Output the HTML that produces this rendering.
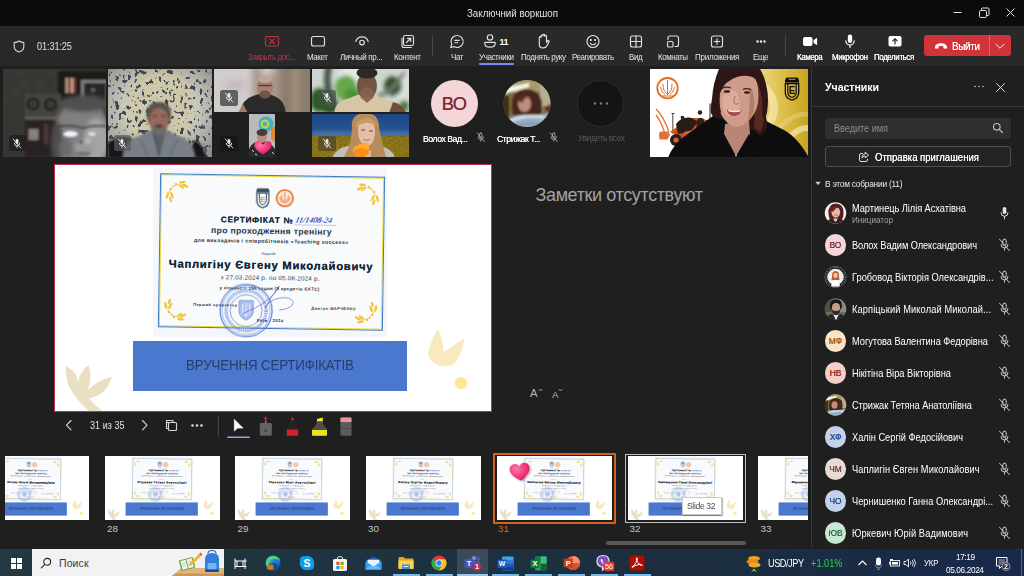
<!DOCTYPE html>
<html lang="ru">
<head>
<meta charset="utf-8">
<title>Заключний воркшоп</title>
<style>
*{box-sizing:border-box;margin:0;padding:0}
html,body{width:1024px;height:576px;overflow:hidden;background:#1f1f1f;font-family:"Liberation Sans","DejaVu Sans",sans-serif;color:#fff}
.a{position:absolute}
.x{position:absolute;white-space:nowrap}
svg{overflow:hidden;display:block}
#titlebar{position:absolute;left:0;top:0;width:1024px;height:26px;background:#0b0b0b}
#toolbar{position:absolute;left:0;top:26px;width:1024px;height:40px;background:#292929}
#taskbar{position:absolute;left:0;top:548.5px;width:1024px;height:27.5px;background:linear-gradient(90deg,#233841 0%,#203340 30%,#1c2e3e 65%,#1a2b45 85%,#18294a 100%)}
#slide{position:absolute;left:54px;top:164px;width:438px;height:248px;background:#fff;border:1.3px solid #c4314b;overflow:hidden}

</style>
</head>
<body>
<div id="titlebar">
<div class="x" style="left:466.50px;top:6.20px;font-size:10.8px;line-height:14px;color:#e4e4e4;letter-spacing:0.003px;transform:scaleX(0.9);transform-origin:0 50%;">Заключний воркшоп</div>
<svg class="a" style="left:950px;top:5px" width="70" height="16" viewBox="0 0 70 16" fill="none" stroke="#e0e0e0" stroke-width="1"><path d="M3.5 7.5h8"/><rect x="29.5" y="5.5" width="7" height="7" rx="1.2"/><path d="M31.5 5.2v-1.2a1 1 0 0 1 1-1h5.500a1 1 0 0 1 1 1v5.500a1 1 0 0 1-1 1h-1.200"/><path d="M56.500 3.500l8 8M64.500 3.500l-8 8"/></svg>
</div>
<div id="toolbar">
<svg class="a" style="left:13px;top:14px" width="12" height="13" viewBox="0 0 12 13" fill="none" stroke="#d8d8d8" stroke-width="1.1" stroke-linejoin="round"><path d="M6 1C4.600 2 3 2.500 1.200 2.600V6.500c0 2.800 2 4.600 4.800 5.600 2.800-1 4.800-2.800 4.800-5.600V2.600C9 2.500 7.400 2 6 1z"/></svg>
<div class="x" style="left:37.00px;top:14.10px;font-size:10.2px;line-height:13px;color:#e0e0e0;letter-spacing:-0.116px;transform:scaleX(0.9);transform-origin:0 50%;">01:31:25</div>
<svg class="a" style="left:260px;top:4.700px" width="24" height="22" viewBox="0 0 24 22" fill="none" stroke="#e0e0e0" stroke-width="1.15" stroke-linecap="round" stroke-linejoin="round"><rect x="5.500" y="5.500" width="13" height="9.500" rx="1.500" stroke="#c4314b"/><path d="M9.700 7.900l4.600 4.600M14.300 7.900l-4.600 4.600" stroke="#c4314b"/></svg>
<div class="x" style="left:248.41px;top:24.60px;font-size:9.2px;line-height:12px;color:#c4314b;letter-spacing:-0.500px;transform:scaleX(0.87);transform-origin:0 50%;">Закрыть дос...</div>
<svg class="a" style="left:305.5px;top:4.700px" width="24" height="22" viewBox="0 0 24 22" fill="none" stroke="#e0e0e0" stroke-width="1.15" stroke-linecap="round" stroke-linejoin="round"><rect x="5.500" y="5.500" width="13" height="9.500" rx="2"/></svg>
<div class="x" style="left:307.04px;top:24.60px;font-size:9.2px;line-height:12px;color:#e4e4e4;letter-spacing:-0.500px;transform:scaleX(0.87);transform-origin:0 50%;">Макет</div>
<svg class="a" style="left:349.5px;top:4.700px" width="24" height="22" viewBox="0 0 24 22" fill="none" stroke="#e0e0e0" stroke-width="1.15" stroke-linecap="round" stroke-linejoin="round"><path d="M5.800 10.500c1-3 3.400-4.600 6.200-4.600s5.200 1.600 6.200 4.600"/><circle cx="12" cy="11.500" r="2.300"/></svg>
<div class="x" style="left:340.25px;top:24.60px;font-size:9.2px;line-height:12px;color:#e4e4e4;letter-spacing:-0.388px;transform:scaleX(0.87);transform-origin:0 50%;">Личный пр...</div>
<svg class="a" style="left:396px;top:4.700px" width="24" height="22" viewBox="0 0 24 22" fill="none" stroke="#e0e0e0" stroke-width="1.15" stroke-linecap="round" stroke-linejoin="round"><rect x="7.500" y="4.500" width="10" height="10" rx="1.800"/><path d="M6 7.200v7a2.300 2.300 0 0 0 2.300 2.300h7"/><path d="M10.500 11.500l4-4M11.500 7.300h3.200v3.200"/></svg>
<div class="x" style="left:394.48px;top:24.60px;font-size:9.2px;line-height:12px;color:#e4e4e4;letter-spacing:-0.500px;transform:scaleX(0.87);transform-origin:0 50%;">Контент</div>
<div class="a" style="left:432px;top:9px;width:1px;height:21px;background:#484848"></div>
<svg class="a" style="left:445px;top:4.700px" width="24" height="22" viewBox="0 0 24 22" fill="none" stroke="#e0e0e0" stroke-width="1.15" stroke-linecap="round" stroke-linejoin="round"><path d="M12 4.500a6 6 0 0 0-5.300 8.800l-1 3.200 3.300-.9A6 6 0 1 0 12 4.500z"/><path d="M9.800 9.300h4.400M9.800 11.700h3"/></svg>
<div class="x" style="left:450.80px;top:24.60px;font-size:9.2px;line-height:12px;color:#e4e4e4;letter-spacing:-0.500px;transform:scaleX(0.87);transform-origin:0 50%;">Чат</div>
<svg class="a" style="left:478px;top:4.700px" width="24" height="22" viewBox="0 0 24 22" fill="none" stroke="#e0e0e0" stroke-width="1.15" stroke-linecap="round" stroke-linejoin="round"><circle cx="12" cy="6.400" r="2.700"/><path d="M6.800 11.400h10.400v1c0 2.200-2.100 3.700-5.200 3.700s-5.200-1.500-5.200-3.700z"/></svg>
<div class="x" style="left:499.50px;top:10.50px;font-size:8.8px;line-height:11px;color:#fff;letter-spacing:-0.302px;font-weight:bold;">11</div>
<div class="x" style="left:478.80px;top:24.60px;font-size:9.2px;line-height:12px;color:#e4e4e4;letter-spacing:-0.465px;transform:scaleX(0.87);transform-origin:0 50%;">Участники</div>
<div class="a" style="left:479px;top:37px;width:35px;height:2px;background:#7f85f5;border-radius:1px"></div>
<svg class="a" style="left:531px;top:4.700px" width="24" height="22" viewBox="0 0 24 22" fill="none" stroke="#e0e0e0" stroke-width="1.15" stroke-linecap="round" stroke-linejoin="round"><path transform="translate(0 -.7)" d="M8.300 11V7.200a.9.900 0 0 1 1.800 0V5.600a.9.900 0 0 1 1.800 0V5a.9.900 0 0 1 1.800 0v.9a.9.900 0 0 1 1.800 0v6.200l1-1.500a.9.900 0 0 1 1.500 1l-2.300 4.200a3.500 3.500 0 0 1-3 1.700h-1a3.400 3.400 0 0 1-3.400-3.400z"/></svg>
<div class="x" style="left:520.50px;top:24.60px;font-size:9.2px;line-height:12px;color:#e4e4e4;letter-spacing:-0.467px;transform:scaleX(0.87);transform-origin:0 50%;">Поднять руку</div>
<svg class="a" style="left:581px;top:4.700px" width="24" height="22" viewBox="0 0 24 22" fill="none" stroke="#e0e0e0" stroke-width="1.15" stroke-linecap="round" stroke-linejoin="round"><circle cx="12" cy="10.500" r="6"/><circle cx="9.900" cy="9" r=".5" fill="#e0e0e0"/><circle cx="14.100" cy="9" r=".5" fill="#e0e0e0"/><path d="M9.300 12.300c.7.900 1.600 1.400 2.700 1.400s2-.5 2.700-1.400"/></svg>
<div class="x" style="left:571.95px;top:24.60px;font-size:9.2px;line-height:12px;color:#e4e4e4;letter-spacing:-0.500px;transform:scaleX(0.87);transform-origin:0 50%;">Реагировать</div>
<svg class="a" style="left:624px;top:4.700px" width="24" height="22" viewBox="0 0 24 22" fill="none" stroke="#e0e0e0" stroke-width="1.15" stroke-linecap="round" stroke-linejoin="round"><rect x="6.500" y="5" width="11" height="11" rx="2"/><path d="M12 5v11M6.500 10.500h11"/></svg>
<div class="x" style="left:629.20px;top:24.60px;font-size:9.2px;line-height:12px;color:#e4e4e4;letter-spacing:-0.500px;transform:scaleX(0.87);transform-origin:0 50%;">Вид</div>
<svg class="a" style="left:661px;top:4.700px" width="24" height="22" viewBox="0 0 24 22" fill="none" stroke="#e0e0e0" stroke-width="1.15" stroke-linecap="round" stroke-linejoin="round"><path d="M7 8.500V7a2 2 0 0 1 2-2h6.500a2 2 0 0 1 2 2v6.500a2 2 0 0 1-2 2H14"/><rect x="6.500" y="10.500" width="5.500" height="5.500" rx="1.300"/></svg>
<div class="x" style="left:657.94px;top:24.60px;font-size:9.2px;line-height:12px;color:#e4e4e4;letter-spacing:-0.500px;transform:scaleX(0.87);transform-origin:0 50%;">Комнаты</div>
<svg class="a" style="left:705px;top:4.700px" width="24" height="22" viewBox="0 0 24 22" fill="none" stroke="#e0e0e0" stroke-width="1.15" stroke-linecap="round" stroke-linejoin="round"><rect x="6.500" y="5" width="11" height="11" rx="2"/><path d="M12 7.800v5.400M9.300 10.500h5.400"/></svg>
<div class="x" style="left:694.75px;top:24.60px;font-size:9.2px;line-height:12px;color:#e4e4e4;letter-spacing:-0.297px;transform:scaleX(0.87);transform-origin:0 50%;">Приложения</div>
<svg class="a" style="left:749px;top:4.700px" width="24" height="22" viewBox="0 0 24 22" fill="none" stroke="#e0e0e0" stroke-width="1.15" stroke-linecap="round" stroke-linejoin="round"><circle cx="8.500" cy="10.500" r=".7" fill="#e0e0e0"/><circle cx="12" cy="10.500" r=".7" fill="#e0e0e0"/><circle cx="15.500" cy="10.500" r=".7" fill="#e0e0e0"/></svg>
<div class="x" style="left:753.29px;top:24.60px;font-size:9.2px;line-height:12px;color:#e4e4e4;letter-spacing:-0.500px;transform:scaleX(0.87);transform-origin:0 50%;">Еще</div>
<div class="a" style="left:785px;top:9px;width:1px;height:21px;background:#484848"></div>
<svg class="a" style="left:797.5px;top:4.700px" width="24" height="22" viewBox="0 0 24 22" fill="none" stroke="#e0e0e0" stroke-width="1.15" stroke-linecap="round" stroke-linejoin="round"><rect x="5" y="6" width="9.500" height="9" rx="2" fill="#fff" stroke="none"/><path d="M15.500 9.300l3-2.300a.4.400 0 0 1 .6.300v6.400a.4.400 0 0 1-.6.300l-3-2.300z" fill="#fff" stroke="none"/></svg>
<div class="x" style="left:796.60px;top:24.60px;font-size:9.2px;line-height:12px;color:#fff;letter-spacing:-0.500px;transform:scaleX(0.87);transform-origin:0 50%;text-shadow:0 0 0.45px #fff;">Камера</div>
<svg class="a" style="left:838px;top:4.700px" width="24" height="22" viewBox="0 0 24 22" fill="none" stroke="#e0e0e0" stroke-width="1.15" stroke-linecap="round" stroke-linejoin="round"><rect x="9.800" y="3.500" width="4.400" height="8.500" rx="2.200" fill="#fff" stroke="none"/><path d="M7.800 9.800a4.200 4.200 0 0 0 8.400 0M12 14v2.500" stroke="#fff" stroke-width="1.200"/></svg>
<div class="x" style="left:832.00px;top:24.60px;font-size:9.2px;line-height:12px;color:#fff;letter-spacing:-0.492px;transform:scaleX(0.87);transform-origin:0 50%;text-shadow:0 0 0.45px #fff;">Микрофон</div>
<svg class="a" style="left:882.5px;top:4.700px" width="24" height="22" viewBox="0 0 24 22" fill="none" stroke="#e0e0e0" stroke-width="1.15" stroke-linecap="round" stroke-linejoin="round"><rect x="5.500" y="5" width="13" height="10.500" rx="1.800" fill="#fff" stroke="none"/><path d="M12 13V7.800M9.800 9.800L12 7.600l2.200 2.200" stroke="#292929" stroke-width="1.200"/></svg>
<div class="x" style="left:874.36px;top:24.60px;font-size:9.2px;line-height:12px;color:#fff;letter-spacing:-0.500px;transform:scaleX(0.87);transform-origin:0 50%;text-shadow:0 0 0.45px #fff;">Поделиться</div>
<div class="a" style="left:924px;top:9px;width:87px;height:21px;background:#d13438;border-radius:3px"></div>
<div class="a" style="left:989px;top:9px;width:1px;height:21px;background:#de6366"></div>
<svg class="a" style="left:934px;top:15px" width="14" height="10" viewBox="0 0 14 10"><path d="M1 6.200C1 3.500 4 2.200 7 2.200s6 1.300 6 4v.6c0 .6-.5 1-1.100.9l-1.700-.3c-.5-.1-.8-.5-.8-1V5.500C8.500 5.200 7.800 5.100 7 5.100s-1.500.1-2.400.4v.9c0 .5-.3.900-.8 1l-1.700.3C1.500 7.800 1 7.400 1 6.800z" fill="#fff"/></svg>
<div class="x" style="left:952.00px;top:14.10px;font-size:9.8px;line-height:13px;color:#fff;letter-spacing:-0.254px;text-shadow:0 0 0.6px #fff;transform:scaleY(1.12);">Выйти</div>
<svg class="a" style="left:994.500px;top:17.300px" width="10" height="7" viewBox="0 0 10 7" fill="none" stroke="#fff" stroke-width=".9" stroke-linecap="round" stroke-linejoin="round"><path d="M1 1.200l4 4 4-4"/></svg>
</div>
<svg width="0" height="0" style="position:absolute"><defs><filter id="b1" x="-20%" y="-20%" width="140%" height="140%"><feGaussianBlur stdDeviation="1"/></filter><filter id="b07" x="-20%" y="-20%" width="140%" height="140%"><feGaussianBlur stdDeviation=".7"/></filter><filter id="b2" x="-20%" y="-20%" width="140%" height="140%"><feGaussianBlur stdDeviation="2"/></filter><filter id="b3" x="-30%" y="-30%" width="160%" height="160%"><feGaussianBlur stdDeviation="3.500"/></filter><filter id="b05" x="-20%" y="-20%" width="140%" height="140%"><feGaussianBlur stdDeviation=".5"/></filter><filter id="wall" x="0" y="0" width="100%" height="100%" color-interpolation-filters="sRGB"><feTurbulence type="fractalNoise" baseFrequency=".26 .2" numOctaves="2" seed="11" result="n"/><feColorMatrix in="n" type="matrix" values="0 0 0 0 .2  0 0 0 0 .22  0 0 0 0 .3  -9 -9 0 0 7.9"/><feGaussianBlur stdDeviation=".5"/></filter><filter id="damask" x="0" y="0" width="100%" height="100%" color-interpolation-filters="sRGB"><feTurbulence type="turbulence" baseFrequency=".09" numOctaves="1" seed="4"/><feColorMatrix type="matrix" values="0 0 0 0 .3  0 0 0 0 .3  0 0 0 0 .27  2.5 0 0 0 -.3"/></filter><filter id="field" x="0" y="0" width="100%" height="100%" color-interpolation-filters="sRGB"><feTurbulence type="fractalNoise" baseFrequency=".5" numOctaves="1" seed="3"/><feColorMatrix type="matrix" values="0 0 0 0 .35  0 0 0 0 .27  0 0 0 0 .02  0 0 0 .9 -.25"/></filter><radialGradient id="vig" cx=".5" cy=".45" r=".75"><stop offset=".45" stop-color="#50545e" stop-opacity="0"/><stop offset="1" stop-color="#50545e" stop-opacity=".55"/></radialGradient><linearGradient id="gy" x1="0" x2="1" y1="0" y2="0"><stop offset="0" stop-color="#f6ecc4"/><stop offset=".5" stop-color="#e2c95c"/><stop offset="1" stop-color="#c9a51e"/></linearGradient><linearGradient id="gsky" x1="0" x2="0" y1="0" y2="1"><stop offset="0" stop-color="#1b4684"/><stop offset="1" stop-color="#3d6eaa"/></linearGradient><radialGradient id="heart" cx=".35" cy=".3" r=".8"><stop offset="0" stop-color="#ff7aa8"/><stop offset=".6" stop-color="#f0347a"/><stop offset="1" stop-color="#c81860"/></radialGradient></defs></svg>
<svg class="a" style="left:3px;top:69px;" width="103" height="88" viewBox="3 69 103 88" preserveAspectRatio="none"><rect x="3" y="69" width="103" height="88" fill="#363733"/><rect x="3" y="69" width="60" height="40" filter="url(#damask)" opacity=".22"/><g filter="url(#b1)"><rect x="58" y="71" width="50" height="30" fill="#1e1b19"/><rect x="65.500" y="78" width="3" height="15" fill="#b59c8a"/><rect x="68.500" y="78" width="2.500" height="15" fill="#8a3a30"/><rect x="71" y="78" width="2.500" height="15" fill="#c0ae9e"/><rect x="73.500" y="78" width="2.500" height="15" fill="#7a3830"/><rect x="81" y="80" width="26" height="21" fill="#7c7c7a"/><rect x="84" y="83" width="22" height="18" fill="#262626"/><ellipse cx="93" cy="90" rx="2.500" ry="2" fill="#6a6458"/><rect x="25" y="94" width="36" height="23" fill="#454541"/><circle cx="33" cy="104" r="6.800" fill="#222220"/><circle cx="50.500" cy="104.500" r="6.800" fill="#222220"/><circle cx="33" cy="104" r="4" fill="#3a3a36"/><circle cx="50.500" cy="104.500" r="4" fill="#3a3a36"/><rect x="25" y="117" width="32" height="40" fill="#2a2220"/><rect x="25" y="117" width="32" height="2.500" fill="#6a6258"/><rect x="28.500" y="129" width="10" height="11" fill="#85817a"/><rect x="44" y="124" width="4" height="20" fill="#4a3a36"/><rect x="3" y="126" width="22" height="31" fill="#343431"/></g><g filter="url(#b2)"><ellipse cx="84" cy="104" rx="26" ry="9" fill="#4a4a48"/><ellipse cx="82" cy="137" rx="29" ry="37" fill="#808080"/><ellipse cx="84" cy="104" rx="24" ry="8" fill="#505050"/><ellipse cx="96" cy="140" rx="12" ry="22" fill="#a4a4a4"/><ellipse cx="84" cy="148" rx="10" ry="8" fill="#9a9a9a"/><ellipse cx="57" cy="142" rx="6" ry="20" fill="#4e4e4e"/><ellipse cx="66" cy="148" rx="7" ry="10" fill="#6c6c6c"/></g><g filter="url(#b1)"><path d="M56 127q13-3 27 1q10-3 23-2" stroke="#3a3a3a" stroke-width="1.600" fill="none"/><ellipse cx="70.500" cy="134" rx="7.500" ry="3" fill="#f0f6ff"/><ellipse cx="92" cy="134" rx="3.800" ry="1.800" fill="#e0e8f2"/><ellipse cx="81" cy="142" rx="2" ry="1.200" fill="#4a4a4a"/><ellipse cx="88" cy="141" rx="3.500" ry="3" fill="#b4b4b4"/><ellipse cx="83" cy="153.500" rx="8" ry="1.800" fill="#7a6c6e"/></g></svg>
<div class="a" style="left:8.6px;top:135.4px;width:17.600px;height:15.600px;border-radius:2.500px;background:rgba(30,30,30,.8)"><svg class="a" style="left:3.800px;top:2.300px" width="10" height="11" viewBox="0 0 10 11" fill="none" stroke="#e8e8e8" stroke-width=".9" stroke-linecap="round"><rect x="3.600" y="1" width="2.800" height="5" rx="1.400" fill="#e8e8e8" stroke="none"/><path d="M2.300 5.200a2.700 2.700 0 0 0 5.400 0M5 8v1.600M1.200 1l7.600 9"/></svg></div>
<svg class="a" style="left:108px;top:69px;" width="104" height="88" viewBox="108 69 104 88" preserveAspectRatio="none"><rect x="108" y="69" width="104" height="88" fill="#cbcabd"/><ellipse cx="160" cy="110" rx="34" ry="50" fill="#cfc8a6" opacity=".8" filter="url(#b3)"/><rect x="108" y="69" width="104" height="88" filter="url(#wall)" opacity=".92"/><rect x="108" y="69" width="104" height="88" fill="url(#vig)"/><g filter="url(#b1)"><path d="M108 158v-16q10-6 24-4l-2 20zM188 158l6-18q10 4 12 18z" fill="#19191b"/><path d="M123 158q0-18 16-22l10-5h20l10 5q14 4 16 22z" fill="#787f89"/><path d="M140 140q6 8 8 18M178 140q-6 8-8 18" stroke="#646b75" stroke-width="1.500" fill="none"/><path d="M152 131l7 27 7-27z" fill="#596069"/><path d="M147 118q-2-16 12-16q13 0 12 16l-2 6h-20z" fill="#55534e"/><ellipse cx="159" cy="121" rx="9.800" ry="13" fill="#96695a"/><ellipse cx="159" cy="130.500" rx="7.800" ry="5.500" fill="#706a66"/><ellipse cx="159" cy="126" rx="3.800" ry="1.500" fill="#42322e"/><path d="M152 116h5M161 116h5" stroke="#3a2a26" stroke-width="1.200"/><path d="M154 134l5 22" stroke="#3a3a3c" stroke-width=".8"/></g></svg>
<div class="a" style="left:113.6px;top:135.4px;width:17.600px;height:15.600px;border-radius:2.500px;background:rgba(90,90,86,.7)"><svg class="a" style="left:3.800px;top:2.300px" width="10" height="11" viewBox="0 0 10 11" fill="none" stroke="#e8e8e8" stroke-width=".9" stroke-linecap="round"><rect x="3.600" y="1" width="2.800" height="5" rx="1.400" fill="#e8e8e8" stroke="none"/><path d="M2.300 5.200a2.700 2.700 0 0 0 5.400 0M5 8v1.600M1.200 1l7.600 9"/></svg></div>
<svg class="a" style="left:214px;top:69px;" width="96" height="43" viewBox="214 69 96 43" preserveAspectRatio="none"><rect x="214" y="69" width="96" height="43" fill="#a8988a"/><g filter="url(#b3)"><rect x="206" y="62" width="46" height="56" fill="#d2cdcd"/><rect x="226" y="80" width="18" height="10" fill="#c4b8b8"/><rect x="254" y="62" width="26" height="56" fill="#a8968a"/><rect x="280" y="62" width="36" height="56" fill="#8a7a6a"/><rect x="292" y="62" width="8" height="56" fill="#a09080"/><rect x="262" y="66" width="10" height="9" fill="#e0d6d6"/></g><g filter="url(#b07)"><path d="M240 113q2-14 13-17l6-2h10l5 2q10 3 12 17z" fill="#2b2a2b"/><path d="M238 113l5-9 5 9z" fill="#a07a64"/><ellipse cx="265" cy="87" rx="8" ry="10.500" fill="#a5806e"/><ellipse cx="265" cy="79.500" rx="7" ry="3.500" fill="#bfa498"/><ellipse cx="265" cy="94.500" rx="5.500" ry="4" fill="#6f5648"/><path d="M258.500 85.500h13" stroke="#4a3c38" stroke-width="1.300"/></g></svg>
<div class="a" style="left:220px;top:90px;width:17.600px;height:15.600px;border-radius:2.500px;background:rgba(72,72,72,.82)"><svg class="a" style="left:3.800px;top:2.300px" width="10" height="11" viewBox="0 0 10 11" fill="none" stroke="#e8e8e8" stroke-width=".9" stroke-linecap="round"><rect x="3.600" y="1" width="2.800" height="5" rx="1.400" fill="#e8e8e8" stroke="none"/><path d="M2.300 5.200a2.700 2.700 0 0 0 5.400 0M5 8v1.600M1.200 1l7.600 9"/></svg></div>
<svg class="a" style="left:312px;top:69px;" width="97" height="43" viewBox="312 69 97 43" preserveAspectRatio="none"><rect x="312" y="69" width="97" height="43" fill="#cfd6cf"/><g filter="url(#b2)"><ellipse cx="350" cy="76" rx="12" ry="8" fill="#e6ece6"/><ellipse cx="402" cy="86" rx="8" ry="16" fill="#dde1dd"/><ellipse cx="346" cy="88" rx="11" ry="13" fill="#68a848"/><ellipse cx="353" cy="96" rx="8" ry="8" fill="#4f8f3a"/><ellipse cx="319" cy="100" rx="9" ry="12" fill="#2c5a24"/><ellipse cx="330" cy="109" rx="8" ry="5" fill="#2a5222"/><ellipse cx="393" cy="86" rx="9" ry="10" fill="#2f4f26"/><ellipse cx="404" cy="106" rx="5" ry="6" fill="#4a7a3c"/><path d="M329 66q-6 24 8 40" stroke="#36463a" stroke-width="6" fill="none"/><path d="M378 96q16-4 26-24" stroke="#6e7c70" stroke-width="4" fill="none"/></g><g filter="url(#b07)"><path d="M334 113q2-12 13-14l10-4h16l12 4q12 2 17 14z" fill="#d6c6a4"/><ellipse cx="367" cy="86" rx="10" ry="13.500" fill="#735242"/><ellipse cx="367" cy="93" rx="7" ry="6" fill="#866050"/><ellipse cx="367" cy="73" rx="10.500" ry="5.500" fill="#2b2926"/><path d="M360 97l7 6 7-6z" fill="#8a6652"/><path d="M393 102q10 2 13 11h-17z" fill="#6e5038"/></g></svg>
<div class="a" style="left:318px;top:90px;width:17.600px;height:15.600px;border-radius:2.500px;background:rgba(70,80,70,.7)"><svg class="a" style="left:3.800px;top:2.300px" width="10" height="11" viewBox="0 0 10 11" fill="none" stroke="#e8e8e8" stroke-width=".9" stroke-linecap="round"><rect x="3.600" y="1" width="2.800" height="5" rx="1.400" fill="#e8e8e8" stroke="none"/><path d="M2.300 5.200a2.700 2.700 0 0 0 5.400 0M5 8v1.600M1.200 1l7.600 9"/></svg></div>
<svg class="a" style="left:249px;top:114px;" width="26" height="43" viewBox="249 114 26 43" preserveAspectRatio="none"><rect x="249" y="114" width="26" height="43" fill="#b9babc"/><g filter="url(#b05)"><circle cx="266" cy="124" r="7.500" fill="#3fb0c2"/><circle cx="265" cy="124" r="4.500" fill="#c9cf4a"/><circle cx="265" cy="124" r="2.300" fill="#3fb0c2"/><path d="M271 128l4-2v16l-4-3z" fill="#e08a30"/><path d="M249 157v-8q4-8 12-8t14 8v8z" fill="#2a2a2c"/><path d="M252 150l2 2M258 146l2 2M268 147l2 2M272 152l2 2M255 154l2 1M264 150l1 2" stroke="#d8d8d8" stroke-width="1"/><ellipse cx="262" cy="137" rx="5" ry="6" fill="#b98c7c"/><ellipse cx="262" cy="132.500" rx="5.500" ry="3.500" fill="#4a3a38"/></g><path d="M263 155.500c-5-3.200-8.600-6-8.600-9.500a3.900 3.900 0 0 1 7.200-2.100l1.400 1.900 1.400-1.900a3.900 3.900 0 0 1 7.200 2.100c0 3.500-3.600 6.300-8.600 9.500z" fill="url(#heart)" transform="translate(0 -1)"/></svg>
<div class="a" style="left:220px;top:135.8px;width:17.600px;height:15.600px;border-radius:2.500px;background:rgba(22,22,22,.9)"><svg class="a" style="left:3.800px;top:2.300px" width="10" height="11" viewBox="0 0 10 11" fill="none" stroke="#e8e8e8" stroke-width=".9" stroke-linecap="round"><rect x="3.600" y="1" width="2.800" height="5" rx="1.400" fill="#e8e8e8" stroke="none"/><path d="M2.300 5.200a2.700 2.700 0 0 0 5.400 0M5 8v1.600M1.200 1l7.600 9"/></svg></div>
<svg class="a" style="left:312px;top:114px;" width="97" height="43" viewBox="312 114 97 43" preserveAspectRatio="none"><rect x="312" y="114" width="97" height="43" fill="url(#gsky)"/><rect x="312" y="131" width="97" height="6" fill="#7f9fc4" opacity=".3" filter="url(#b1)"/><rect x="312" y="136.200" width="97" height="21" fill="#94801c"/><rect x="312" y="136.200" width="97" height="21" filter="url(#field)"/><g filter="url(#b07)"><path d="M332 158q4-10 16-12h32q12 2 15 12z" fill="#c4bcbc"/><path d="M352 128q-2-14 13-15q14 0 14 14q2 12 7 30l-14 2h-16l-12-2q8-14 8-29z" fill="#b88c5c"/><path d="M358 130q0-10 8-10t9 10q0 10-4 14q-4 3-8 0q-5-4-5-14z" fill="#e6bea6"/><path d="M355 128q2-10 11-10q9 0 11 9q-6-5-12-4q-6 1-10 5z" fill="#c89c68"/><path d="M360 150q5 4 11 0v8h-11z" fill="#dab49c"/></g><g filter="url(#b05)"><path d="M361 130h4M369 131h4" stroke="#5a4038" stroke-width="1"/><path d="M363 139.500q3.500 1.500 7 0" stroke="#b46a62" stroke-width="1" fill="none"/><path d="M353 149l2.500-3.500 2 1 2-3 2 1 2-2.500 2 1.500 2-1 1.500 3.500v6q-2 4.500-8 4.500t-8.500-5z" fill="#ffab2e"/><path d="M353.500 150q7-4 15 0v3q-2 4.500-7.500 4.500t-7.500-5z" fill="#fb8c1a"/></g></svg>
<div class="a" style="left:318px;top:135.8px;width:17.600px;height:15.600px;border-radius:2.500px;background:rgba(84,74,40,.8)"><svg class="a" style="left:3.800px;top:2.300px" width="10" height="11" viewBox="0 0 10 11" fill="none" stroke="#e8e8e8" stroke-width=".9" stroke-linecap="round"><rect x="3.600" y="1" width="2.800" height="5" rx="1.400" fill="#e8e8e8" stroke="none"/><path d="M2.300 5.200a2.700 2.700 0 0 0 5.400 0M5 8v1.600M1.200 1l7.600 9"/></svg></div>
<div class="a" style="left:431px;top:80px;width:47px;height:47px;border-radius:50%;background:#f3d6d8"></div>
<div class="x" style="left:441.63px;top:92.30px;font-size:18.3px;line-height:24px;color:#85283a;letter-spacing:-0.500px;text-shadow:0 0 0.5px #85283a;">ВО</div>
<div class="x" style="left:423.00px;top:131.70px;font-size:9.8px;line-height:13px;color:#fff;letter-spacing:-0.500px;transform:scaleX(0.88);transform-origin:0 50%;text-shadow:0 0 0.35px #fff;">Волох Вад...</div>
<svg class="a" style="left:475.5px;top:132.3px" width="9.500" height="10.500" viewBox="0 0 11 12" fill="none" stroke="#c4c4c4" stroke-width=".9" stroke-linecap="round"><rect x="4.100" y="1" width="2.800" height="5.400" rx="1.400"/><path d="M2.500 5.500a3 3 0 0 0 6 0M5.500 8.600v1.900M1.300 1l8.400 10"/></svg>
<svg class="a" style="left:503px;top:80px;" width="48" height="48" viewBox="503 80 48 48" preserveAspectRatio="none"><defs><clipPath id="ca2"><circle cx="527" cy="103.500" r="23.500"/></clipPath></defs><g clip-path="url(#ca2)"><rect x="503" y="80" width="48" height="48" fill="#7d6d42"/><g filter="url(#b1)"><rect x="500" y="78" width="54" height="14" fill="#a89c6c"/><path d="M505 88l24-5v4l-24 7z" fill="#f6f6ea"/><rect x="540" y="84" width="14" height="26" fill="#b8ad90"/><rect x="500" y="96" width="9" height="34" fill="#3a3018"/><path d="M512 104q0-14 14-15q14 0 16 14q1 10-4 16h-22q-5-6-4-15z" fill="#4a261e"/><ellipse cx="524.500" cy="104" rx="6.500" ry="8" fill="#c08e7c"/><path d="M517 100q4-7 14-5q-6 2-9 8z" fill="#5a2e24"/><path d="M503 130q3-16 22-15q14 1 26-3v18z" fill="#98aec4"/><path d="M508 122q14-8 36-5" stroke="#d6e0ea" stroke-width="3" fill="none"/><path d="M512 128q14-6 30-4" stroke="#7f96ae" stroke-width="2" fill="none"/><path d="M541 108q7 2 10 8v-12z" fill="#5f3426"/></g></g></svg>
<div class="x" style="left:496.70px;top:131.70px;font-size:9.8px;line-height:13px;color:#fff;letter-spacing:-0.467px;transform:scaleX(0.88);transform-origin:0 50%;text-shadow:0 0 0.35px #fff;">Стрижак Т...</div>
<svg class="a" style="left:549px;top:132.3px" width="9.500" height="10.500" viewBox="0 0 11 12" fill="none" stroke="#c4c4c4" stroke-width=".9" stroke-linecap="round"><rect x="4.100" y="1" width="2.800" height="5.400" rx="1.400"/><path d="M2.500 5.500a3 3 0 0 0 6 0M5.500 8.600v1.900M1.300 1l8.400 10"/></svg>
<div class="a" style="left:577px;top:80px;width:47px;height:47px;border-radius:50%;background:#141414;border:1px solid #2b2b2b"></div>
<svg class="a" style="left:592px;top:101px" width="18" height="5" viewBox="0 0 18 5"><circle cx="3" cy="2.500" r="1.200" fill="#7c7c7c"/><circle cx="9" cy="2.500" r="1.200" fill="#7c7c7c"/><circle cx="15" cy="2.500" r="1.200" fill="#7c7c7c"/></svg>
<div class="x" style="left:577.50px;top:132.20px;font-size:9.6px;line-height:12px;color:#5a5a5a;letter-spacing:-0.456px;transform:scaleX(0.88);transform-origin:0 50%;">Увидеть всех</div>
<svg class="a" style="left:650px;top:69px;" width="158" height="88" viewBox="650 69 158 88" preserveAspectRatio="none"><defs><clipPath id="cbv"><rect x="650" y="69" width="158" height="88"/></clipPath></defs><g clip-path="url(#cbv)"><rect x="650" y="69" width="158" height="88" fill="#fff"/><rect x="740" y="69" width="68" height="88" fill="url(#gy)"/><circle cx="808" cy="150" r="22" fill="none" stroke="#f3e7b0" stroke-width="6" opacity=".7"/><circle cx="808" cy="150" r="36" fill="none" stroke="#efe0a0" stroke-width="5" opacity=".35"/><circle cx="748" cy="108" r="26" fill="none" stroke="#fff6d8" stroke-width="8" opacity=".5"/><g filter="url(#b05)"><circle cx="667.500" cy="88.200" r="10.200" fill="none" stroke="#e2701c" stroke-width="1.800"/><path d="M667.500 80v15M663 84q0 8 4.500 10q4.500-2 4.500-10M660.500 87q1 6 5 8M674.500 87q-1 6-5 8M662 96h11" stroke="#e2701c" stroke-width="1" fill="none"/><path d="M786.500 77.500h11l1.500 2.500v2.500h-14v-2.500z" fill="#111"/><path d="M788.500 79.300h7" stroke="#e2c860" stroke-width=".8"/><path d="M785.300 83.500h13.400v9q0 6-6.700 7.700q-6.700-1.700-6.700-7.700z" fill="none" stroke="#111" stroke-width="1.300"/><path d="M787.800 84v8.300q0 4 4.200 5.200q4.200-1.200 4.200-5.200V84" fill="none" stroke="#111" stroke-width="1.200"/><text x="792" y="94.300" font-size="10" font-weight="bold" text-anchor="middle" fill="#111" font-family="Liberation Sans, sans-serif">Е</text><path d="M656 109q8 8 13 23M656 115q6 8 9 19" stroke="#e2763a" stroke-width="1.300" fill="none"/><path d="M659 134q0-2.500 3-2.500h6l2 3-2.500 5h-8z" fill="#e2703a"/><path d="M672.800 113.500v20M671.500 113.500h3" stroke="#3a2a24" stroke-width=".9"/><path d="M710 103.500v20" stroke="#2a2220" stroke-width="1"/><path d="M670 132l8-6 10-8h14l8 4v14l-20 6z" fill="#c8561e"/><path d="M676 124q6-8 16-6l6 4-8 10-12 2z" fill="#2a1c18"/><circle cx="682.500" cy="117.500" r="1.800" fill="#2a1c18"/><circle cx="700" cy="112.500" r="2.200" fill="#2a2220"/><path d="M696.500 121q3.500-6 7.500-1v8h-7.500z" fill="#2a2220"/><circle cx="676" cy="140" r="6" fill="#2a1c18"/><circle cx="676" cy="140" r="2.600" fill="#d8642a"/><path d="M684 132l14-3 2 8-14 4z" fill="#e0662a"/></g><g filter="url(#b07)"><path d="M667 160q6-17 22-27l24-17 5-4 46 8 16 8q18 8 30 32z" fill="#0b0b0d"/><path d="M719 69q-6 14-7 30q-2 10-1 14q2 6 10 6l34 12q4 6 6 4q8-6 6-14q-2-4 0-8q2-14 0-24q-2-12-7-20z" fill="#2e1612"/><path d="M758 84q6 14 4 30q4 8-2 18l-6-4q2-24 0-44z" fill="#5a2a20"/><path d="M725 124l-1 10 12 26 14-26-1-14z" fill="#b98674"/><path d="M717 96q0-12 6-18q10-6 24-4q10 2 11 14q2 16-4 26q-6 10-16 13q-8 0-14-8q-6-8-7-23z" fill="#cf9c8a"/><ellipse cx="731" cy="103" rx="9" ry="13" fill="#e0b0a0" opacity=".75"/><path d="M750 86q6 10 4 24q-2 8-6 12q2-18 2-36z" fill="#a87262" opacity=".7"/><path d="M717 100q-2-14 4-24q10-8 24-7q10 0 14 12q-10-8-22-4q-12 4-16 14z" fill="#2e1612"/><path d="M716 96q-1 10 2 18l3-2q-2-8-1-18z" fill="#2e1612"/></g><g filter="url(#b05)"><path d="M722 88.500q4-2.500 9-.5M743 89.500q4-2 8 .5" stroke="#3a2420" stroke-width="1.300" fill="none"/><ellipse cx="727" cy="91.500" rx="3.200" ry="1.300" fill="#2a1a18"/><ellipse cx="747" cy="92.500" rx="3" ry="1.300" fill="#2a1a18"/><path d="M735 96q-1.500 5-1 7.500q2 1.500 5 0" stroke="#a87060" stroke-width="1" fill="none"/><path d="M726.500 109.500q7 2.500 15.500 0q-2 6.500-8 6.500t-7.500-6.500z" fill="#a84850"/><path d="M728.500 110.500q6 1.800 12 0" stroke="#f6eeee" stroke-width="1.700" fill="none"/><path d="M724 134l12 22 13-22 8 26h-40z" fill="#0b0b0d"/><circle cx="736" cy="155.500" r=".9" fill="#9bc"/></g></g></svg>
<div class="x" style="left:535.50px;top:184.30px;font-size:18px;line-height:23px;color:#a2a2a2;letter-spacing:-0.378px;">Заметки отсутствуют</div>
<div class="x" style="left:530.00px;top:386.30px;font-size:11.3px;line-height:15px;color:#b4b4b4;letter-spacing:0.000px;">A</div>
<svg class="a" style="left:537.500px;top:387.600px" width="5" height="4" viewBox="0 0 5 4" fill="none" stroke="#b4b4b4" stroke-width=".8"><path d="M.8 3l1.700-2 1.700 2"/></svg>
<div class="x" style="left:552.00px;top:387.80px;font-size:9.7px;line-height:13px;color:#b4b4b4;letter-spacing:0.000px;">A</div>
<svg class="a" style="left:558px;top:388.300px" width="5" height="4" viewBox="0 0 5 4" fill="none" stroke="#b4b4b4" stroke-width=".8"><path d="M.8 1l1.700 2 1.700-2"/></svg>
<svg class="a" style="left:60px;top:416px" width="300" height="22" viewBox="60 416 300 22" fill="none" stroke="#d6d6d6" stroke-width="1.100" stroke-linecap="round" stroke-linejoin="round"><path d="M71 420.500l-4.500 4.700 4.500 4.700"/><path d="M142.500 420.500l4.500 4.700-4.500 4.700"/><path d="M166.500 422.500v-2h6.500v2"/><rect x="168.500" y="422.500" width="8" height="8" rx="1"/><path d="M166.500 422.500h2v6h-2z"/><circle cx="192.500" cy="425.500" r=".8" fill="#d6d6d6"/><circle cx="197" cy="425.500" r=".8" fill="#d6d6d6"/><circle cx="201.500" cy="425.500" r=".8" fill="#d6d6d6"/><path d="M218.300 415v21" stroke="#484848"/><path d="M234.300 419.500v11.600l3.300-3h5.200z" fill="#fff" stroke="#fff" stroke-width=".6"/><path d="M228 437.400h21" stroke="#9da1ee" stroke-width="1.800"/><rect x="259.800" y="423" width="12" height="12.700" rx="1.300" fill="#626262" stroke="none"/><circle cx="265.800" cy="430.500" r="2.300" fill="#4a4a4a" stroke="#777" stroke-width=".5"/><path d="M265.700 416.800v3.400M264.200 418.400h3" stroke="#e03040" stroke-width=".9"/><rect x="265" y="420.500" width="1.400" height="2.500" fill="#888" stroke="none"/><path d="M286.700 435.700v-7l4.300-8.700h3l4.300 8.700v7z" fill="#242424" stroke="none"/><path d="M291 420l1.500-3 1.500 3z" fill="#e8283a" stroke="none"/><path d="M286.700 429.500h11.600v5.200q0 1-1 1h-9.600q-1 0-1-1z" fill="#d4202e" stroke="none"/><path d="M312 435.700v-6.500l4.500-5v-3l6.500-.2v3.200l4 5v6.500z" fill="#4e4e4e" stroke="none"/><path d="M317 421.300v-2.300l5.800-1.600v3.900z" fill="#f4ea28" stroke="none"/><path d="M312 430h15v4.700q0 1-1 1h-13q-1 0-1-1z" fill="#ece41e" stroke="none"/><rect x="340.400" y="417.500" width="11.100" height="18.200" rx="1.300" fill="#5c5c5c" stroke="none"/><path d="M340.400 422v-3.200q0-1.300 1.300-1.300h8.500q1.300 0 1.300 1.300v3.200z" fill="#f090a0" stroke="none"/><rect x="340.400" y="428" width="11.100" height="1" fill="#4a4a4a" stroke="none"/></svg>
<div class="x" style="left:90.00px;top:419.00px;font-size:10px;line-height:13px;color:#e0e0e0;letter-spacing:0.052px;transform:scaleX(0.9);transform-origin:0 50%;">31 из 35</div>
<div id="slide"><div class="a" style="left:-55.300px;top:-165.300px">
<div class="a" style="left:153.500px;top:168px;width:233.500px;height:169px;background:#f5f6f9"></div>
<svg class="a" style="left:55px;top:165px" width="436" height="246" viewBox="55 165 436 246"><path d="M65.600 366Q77 371 78 382.300Q80 372 88.400 365.100Q93 377 87.800 390Q98 380 111.800 376.800Q107 395 89 398.600Q95 406 102 410.500L102 412L90 412Q76 400 70 388Q65 378 65.600 366Z" fill="#e9e0c4"/><path d="M437.900 328.800Q430 342 428 354Q429 360 436 364Q444 368 452 365Q458 361 461 352Q464 344 464.100 338.200L443.700 351.900Q443 340 437.900 328.800Z" fill="#f8e9bf"/><circle cx="461" cy="383.200" r="6.200" fill="#ffe596"/></svg>
<div class="a" style="left:0;top:0;width:0;height:0;transform:rotate(.85deg);transform-origin:271.500px 252px">
<div class="a" style="left:158.900px;top:175.450px;width:225.200px;height:153.100px;border:1.200px solid #3b7cc0;box-shadow:inset 0 0 0 1px #ecd93c;background:#f9fafc"></div>
<svg class="a" style="left:55px;top:165px;overflow:visible" width="436" height="246" viewBox="55 165 436 246"><g transform="translate(159.500 176)"><g fill="#f2c53a"><ellipse cx="22" cy="7.500" rx="3.400" ry="1.250" transform="rotate(-6 22 7.500)"/><ellipse cx="24.500" cy="11" rx="3.600" ry="1.300" transform="rotate(27 24.500 11)"/><ellipse cx="21" cy="11.800" rx="3.200" ry="1.200" transform="rotate(36 21 11.800)"/><circle cx="15.500" cy="9.500" r="1.200"/><circle cx="13" cy="11.300" r=".9"/><circle cx="10.300" cy="14.500" r="1.250"/><ellipse cx="7" cy="21" rx="1.300" ry="3.500" transform="rotate(14 7 21)"/><ellipse cx="11.500" cy="20.500" rx="1.300" ry="3.600" transform="rotate(-26 11.500 20.500)"/><ellipse cx="10.500" cy="25" rx="1.200" ry="3.200" transform="rotate(-20 10.500 25)"/><path d="M8.500 18Q11.500 11.500 20 9" stroke="#f2c53a" stroke-width=".8" fill="none"/></g></g><g transform="translate(383.500 176) scale(-1 1)"><g fill="#f2c53a"><ellipse cx="22" cy="7.500" rx="3.400" ry="1.250" transform="rotate(-6 22 7.500)"/><ellipse cx="24.500" cy="11" rx="3.600" ry="1.300" transform="rotate(27 24.500 11)"/><ellipse cx="21" cy="11.800" rx="3.200" ry="1.200" transform="rotate(36 21 11.800)"/><circle cx="15.500" cy="9.500" r="1.200"/><circle cx="13" cy="11.300" r=".9"/><circle cx="10.300" cy="14.500" r="1.250"/><ellipse cx="7" cy="21" rx="1.300" ry="3.500" transform="rotate(14 7 21)"/><ellipse cx="11.500" cy="20.500" rx="1.300" ry="3.600" transform="rotate(-26 11.500 20.500)"/><ellipse cx="10.500" cy="25" rx="1.200" ry="3.200" transform="rotate(-20 10.500 25)"/><path d="M8.500 18Q11.500 11.500 20 9" stroke="#f2c53a" stroke-width=".8" fill="none"/></g></g><g transform="translate(159.500 328) scale(1 -1)"><g fill="#f2c53a"><ellipse cx="22" cy="7.500" rx="3.400" ry="1.250" transform="rotate(-6 22 7.500)"/><ellipse cx="24.500" cy="11" rx="3.600" ry="1.300" transform="rotate(27 24.500 11)"/><ellipse cx="21" cy="11.800" rx="3.200" ry="1.200" transform="rotate(36 21 11.800)"/><circle cx="15.500" cy="9.500" r="1.200"/><circle cx="13" cy="11.300" r=".9"/><circle cx="10.300" cy="14.500" r="1.250"/><ellipse cx="7" cy="21" rx="1.300" ry="3.500" transform="rotate(14 7 21)"/><ellipse cx="11.500" cy="20.500" rx="1.300" ry="3.600" transform="rotate(-26 11.500 20.500)"/><ellipse cx="10.500" cy="25" rx="1.200" ry="3.200" transform="rotate(-20 10.500 25)"/><path d="M8.500 18Q11.500 11.500 20 9" stroke="#f2c53a" stroke-width=".8" fill="none"/></g></g><g transform="translate(383.500 328) scale(-1 -1)"><g fill="#f2c53a"><ellipse cx="22" cy="7.500" rx="3.400" ry="1.250" transform="rotate(-6 22 7.500)"/><ellipse cx="24.500" cy="11" rx="3.600" ry="1.300" transform="rotate(27 24.500 11)"/><ellipse cx="21" cy="11.800" rx="3.200" ry="1.200" transform="rotate(36 21 11.800)"/><circle cx="15.500" cy="9.500" r="1.200"/><circle cx="13" cy="11.300" r=".9"/><circle cx="10.300" cy="14.500" r="1.250"/><ellipse cx="7" cy="21" rx="1.300" ry="3.500" transform="rotate(14 7 21)"/><ellipse cx="11.500" cy="20.500" rx="1.300" ry="3.600" transform="rotate(-26 11.500 20.500)"/><ellipse cx="10.500" cy="25" rx="1.200" ry="3.200" transform="rotate(-20 10.500 25)"/><path d="M8.500 18Q11.500 11.500 20 9" stroke="#f2c53a" stroke-width=".8" fill="none"/></g></g><g filter="url(#b05)"><path d="M256.500 188.500h11l1 2v1.500h-13v-1.500z" fill="#3a5068"/><path d="M256 193h12v7.500q0 5.500-6 7.500q-6-2-6-7.500z" fill="none" stroke="#3a5068" stroke-width="1.300"/><path d="M258.500 193.500v6.800q0 3.600 3.500 4.800q3.500-1.200 3.500-4.800v-6.800" fill="none" stroke="#3a5068" stroke-width="1"/><text x="262" y="202" font-size="8" font-weight="bold" text-anchor="middle" fill="#c9a227" font-family="Liberation Sans, sans-serif">Е</text><circle cx="284" cy="198" r="8.200" fill="#fbe9dc" stroke="#e8742a" stroke-width="1.800"/><path d="M284 192v11M280.500 195q0 6 3.500 7.500q3.500-1.500 3.500-7.500M278.800 197q.8 4.500 3.700 6M289.200 197q-.8 4.500-3.700 6" stroke="#e8742a" stroke-width=".9" fill="none"/></g><path d="M294 224.500h42" stroke="#8a96c8" stroke-width=".5"/><g fill="none" stroke="#3f6fd8" opacity=".82" filter="url(#b05)"><circle cx="247" cy="311" r="26" stroke-width="1.300"/><circle cx="247" cy="311" r="24" stroke-width=".6"/><circle cx="247" cy="311" r="20" stroke-width="3.400" stroke-dasharray="1.300 .9" opacity=".75"/><circle cx="247" cy="311" r="16" stroke-width=".8"/><path d="M240 301h14v11q0 5-7 8.500q-7-3.500-7-8.500z" fill="#3f6fd8" fill-opacity=".5" stroke-width=".8"/><path d="M247 303.500v13M243.500 304.500v8q2 1 3.500 4q1.500-3 3.500-4v-8" stroke="#e8eefc" stroke-width=".8"/></g><path d="M244 314q14-6 22-12q10-8 14-16q-8 10-14 22q4-8 14-10q12-2 14 4q0 6-14 8" stroke="#5a58c0" stroke-width=".7" fill="none" opacity=".85"/></svg>
<div class="x" style="left:220.30px;top:215.30px;font-size:8.3px;line-height:11px;color:#1d3344;letter-spacing:0.668px;font-weight:bold;text-shadow:0 0 .5px #1d3344;">СЕРТИФІКАТ №</div>
<div class="x" style="left:295.00px;top:215.30px;font-size:7.8px;line-height:10px;color:#3f52c4;letter-spacing:0.124px;text-shadow:0 0 0.4px #3f52c4;font-family:'Liberation Serif',serif;font-style:italic;transform:skewX(-14deg);">11/1408-24</div>
<div class="x" style="left:210.75px;top:225.80px;font-size:8.6px;line-height:11px;color:#1d3344;letter-spacing:0.339px;font-weight:bold;">про проходження тренінгу</div>
<div class="x" style="left:193.75px;top:237.50px;font-size:5.2px;line-height:7px;color:#1d3344;letter-spacing:0.422px;font-weight:bold;">для викладачів і співробітників «Teaching success»</div>
<div class="x" style="left:261.50px;top:251.50px;font-size:3.8px;line-height:5px;color:#667;letter-spacing:-0.222px;">Виданий</div>
<div class="x" style="left:169.00px;top:258.30px;font-size:11.2px;line-height:15px;color:#14293a;letter-spacing:0.771px;font-weight:bold;text-shadow:0 0 .6px #14293a;">Чаплигіну Євгену Миколайовичу</div>
<div class="x" style="left:221.00px;top:274.30px;font-size:6.3px;line-height:8px;color:#2a3c50;letter-spacing:0.222px;">з 27.03.2024 р. по 05.06.2024 р.</div>
<div class="x" style="left:220.00px;top:286.30px;font-size:4.4px;line-height:6px;color:#1d3344;letter-spacing:0.387px;font-weight:bold;">у кількості 150 годин (5 кредитів ЄКТС)</div>
<div class="x" style="left:194.00px;top:303.00px;font-size:3.9px;line-height:5px;color:#1d3344;letter-spacing:0.485px;font-weight:bold;">Перший проректор</div>
<div class="x" style="left:312.00px;top:305.00px;font-size:3.9px;line-height:5px;color:#1d3344;letter-spacing:0.460px;font-weight:bold;">Дмитро МАРЧЕНКО</div>
<div class="x" style="left:257.75px;top:317.50px;font-size:4.2px;line-height:5px;color:#1d3344;letter-spacing:0.452px;font-weight:bold;">Київ - 2024</div>
</div>
<div class="a" style="left:133px;top:341.300px;width:274.200px;height:49.500px;background:#4a78cf"></div>
<div class="x" style="left:186.00px;top:356.40px;font-size:14.8px;line-height:19px;color:#2a3d66;letter-spacing:-0.162px;transform:scaleX(0.9);transform-origin:0 50%;">ВРУЧЕННЯ СЕРТИФІКАТІВ</div>
</div></div>
<div class="a" style="left:4.500px;top:440px;width:804px;height:108px;overflow:hidden">
<div class="a" style="left:488px;top:12.500px;width:123px;height:71px;border:2.500px solid #cf6425;border-radius:1px"></div>
<div class="a" style="left:620px;top:13.500px;width:121px;height:69px;border:1.300px solid #bdbdbd"></div>
<div class="a" style="left:-30.5px;top:16.300px;width:115px;height:63.300px;background:#fff;overflow:hidden">
<div class="a" style="left:0;top:0;width:436px;height:246px;transform:scale(0.2638);transform-origin:0 0"><div class="a" style="left:-55px;top:-165px">
<div class="a" style="left:153.500px;top:168px;width:233.500px;height:169px;background:#f5f6f9"></div>
<svg class="a" style="left:55px;top:165px" width="436" height="246" viewBox="55 165 436 246"><path d="M65.600 366Q77 371 78 382.300Q80 372 88.400 365.100Q93 377 87.800 390Q98 380 111.800 376.800Q107 395 89 398.600Q95 406 102 410.500L102 412L90 412Q76 400 70 388Q65 378 65.600 366Z" fill="#e9e0c4"/><path d="M437.900 328.800Q430 342 428 354Q429 360 436 364Q444 368 452 365Q458 361 461 352Q464 344 464.100 338.200L443.700 351.900Q443 340 437.900 328.800Z" fill="#f8e9bf"/><circle cx="461" cy="383.200" r="6.200" fill="#ffe596"/></svg>
<div class="a" style="left:0;top:0;width:0;height:0;transform:rotate(.85deg);transform-origin:271.500px 252px">
<div class="a" style="left:158.900px;top:175.450px;width:225.200px;height:153.100px;border:1.200px solid #3b7cc0;box-shadow:inset 0 0 0 1px #ecd93c;background:#f9fafc"></div>
<svg class="a" style="left:55px;top:165px;overflow:visible" width="436" height="246" viewBox="55 165 436 246"><g transform="translate(159.500 176)"><g fill="#f2c53a"><ellipse cx="22" cy="7.500" rx="3.400" ry="1.250" transform="rotate(-6 22 7.500)"/><ellipse cx="24.500" cy="11" rx="3.600" ry="1.300" transform="rotate(27 24.500 11)"/><ellipse cx="21" cy="11.800" rx="3.200" ry="1.200" transform="rotate(36 21 11.800)"/><circle cx="15.500" cy="9.500" r="1.200"/><circle cx="13" cy="11.300" r=".9"/><circle cx="10.300" cy="14.500" r="1.250"/><ellipse cx="7" cy="21" rx="1.300" ry="3.500" transform="rotate(14 7 21)"/><ellipse cx="11.500" cy="20.500" rx="1.300" ry="3.600" transform="rotate(-26 11.500 20.500)"/><ellipse cx="10.500" cy="25" rx="1.200" ry="3.200" transform="rotate(-20 10.500 25)"/><path d="M8.500 18Q11.500 11.500 20 9" stroke="#f2c53a" stroke-width=".8" fill="none"/></g></g><g transform="translate(383.500 176) scale(-1 1)"><g fill="#f2c53a"><ellipse cx="22" cy="7.500" rx="3.400" ry="1.250" transform="rotate(-6 22 7.500)"/><ellipse cx="24.500" cy="11" rx="3.600" ry="1.300" transform="rotate(27 24.500 11)"/><ellipse cx="21" cy="11.800" rx="3.200" ry="1.200" transform="rotate(36 21 11.800)"/><circle cx="15.500" cy="9.500" r="1.200"/><circle cx="13" cy="11.300" r=".9"/><circle cx="10.300" cy="14.500" r="1.250"/><ellipse cx="7" cy="21" rx="1.300" ry="3.500" transform="rotate(14 7 21)"/><ellipse cx="11.500" cy="20.500" rx="1.300" ry="3.600" transform="rotate(-26 11.500 20.500)"/><ellipse cx="10.500" cy="25" rx="1.200" ry="3.200" transform="rotate(-20 10.500 25)"/><path d="M8.500 18Q11.500 11.500 20 9" stroke="#f2c53a" stroke-width=".8" fill="none"/></g></g><g transform="translate(159.500 328) scale(1 -1)"><g fill="#f2c53a"><ellipse cx="22" cy="7.500" rx="3.400" ry="1.250" transform="rotate(-6 22 7.500)"/><ellipse cx="24.500" cy="11" rx="3.600" ry="1.300" transform="rotate(27 24.500 11)"/><ellipse cx="21" cy="11.800" rx="3.200" ry="1.200" transform="rotate(36 21 11.800)"/><circle cx="15.500" cy="9.500" r="1.200"/><circle cx="13" cy="11.300" r=".9"/><circle cx="10.300" cy="14.500" r="1.250"/><ellipse cx="7" cy="21" rx="1.300" ry="3.500" transform="rotate(14 7 21)"/><ellipse cx="11.500" cy="20.500" rx="1.300" ry="3.600" transform="rotate(-26 11.500 20.500)"/><ellipse cx="10.500" cy="25" rx="1.200" ry="3.200" transform="rotate(-20 10.500 25)"/><path d="M8.500 18Q11.500 11.500 20 9" stroke="#f2c53a" stroke-width=".8" fill="none"/></g></g><g transform="translate(383.500 328) scale(-1 -1)"><g fill="#f2c53a"><ellipse cx="22" cy="7.500" rx="3.400" ry="1.250" transform="rotate(-6 22 7.500)"/><ellipse cx="24.500" cy="11" rx="3.600" ry="1.300" transform="rotate(27 24.500 11)"/><ellipse cx="21" cy="11.800" rx="3.200" ry="1.200" transform="rotate(36 21 11.800)"/><circle cx="15.500" cy="9.500" r="1.200"/><circle cx="13" cy="11.300" r=".9"/><circle cx="10.300" cy="14.500" r="1.250"/><ellipse cx="7" cy="21" rx="1.300" ry="3.500" transform="rotate(14 7 21)"/><ellipse cx="11.500" cy="20.500" rx="1.300" ry="3.600" transform="rotate(-26 11.500 20.500)"/><ellipse cx="10.500" cy="25" rx="1.200" ry="3.200" transform="rotate(-20 10.500 25)"/><path d="M8.500 18Q11.500 11.500 20 9" stroke="#f2c53a" stroke-width=".8" fill="none"/></g></g><g filter="url(#b05)"><path d="M256.500 188.500h11l1 2v1.500h-13v-1.500z" fill="#3a5068"/><path d="M256 193h12v7.500q0 5.500-6 7.500q-6-2-6-7.500z" fill="none" stroke="#3a5068" stroke-width="1.300"/><path d="M258.500 193.500v6.800q0 3.600 3.500 4.800q3.500-1.200 3.500-4.800v-6.800" fill="none" stroke="#3a5068" stroke-width="1"/><text x="262" y="202" font-size="8" font-weight="bold" text-anchor="middle" fill="#c9a227" font-family="Liberation Sans, sans-serif">Е</text><circle cx="284" cy="198" r="8.200" fill="#fbe9dc" stroke="#e8742a" stroke-width="1.800"/><path d="M284 192v11M280.500 195q0 6 3.500 7.500q3.500-1.500 3.500-7.500M278.800 197q.8 4.500 3.700 6M289.200 197q-.8 4.500-3.700 6" stroke="#e8742a" stroke-width=".9" fill="none"/></g><path d="M294 224.500h42" stroke="#8a96c8" stroke-width=".5"/><g fill="none" stroke="#3f6fd8" opacity=".82" filter="url(#b05)"><circle cx="247" cy="311" r="26" stroke-width="1.300"/><circle cx="247" cy="311" r="24" stroke-width=".6"/><circle cx="247" cy="311" r="20" stroke-width="3.400" stroke-dasharray="1.300 .9" opacity=".75"/><circle cx="247" cy="311" r="16" stroke-width=".8"/><path d="M240 301h14v11q0 5-7 8.500q-7-3.500-7-8.500z" fill="#3f6fd8" fill-opacity=".5" stroke-width=".8"/><path d="M247 303.500v13M243.500 304.500v8q2 1 3.500 4q1.500-3 3.500-4v-8" stroke="#e8eefc" stroke-width=".8"/></g><path d="M244 314q14-6 22-12q10-8 14-16q-8 10-14 22q4-8 14-10q12-2 14 4q0 6-14 8" stroke="#5a58c0" stroke-width=".7" fill="none" opacity=".85"/></svg>
<div class="x" style="left:220.30px;top:215.30px;font-size:8.3px;line-height:11px;color:#1d3344;letter-spacing:0.668px;font-weight:bold;text-shadow:0 0 .5px #1d3344;">СЕРТИФІКАТ №</div>
<div class="x" style="left:295.00px;top:215.30px;font-size:7.8px;line-height:10px;color:#3f52c4;letter-spacing:0.124px;text-shadow:0 0 0.4px #3f52c4;font-family:'Liberation Serif',serif;font-style:italic;transform:skewX(-14deg);">11/1408-24</div>
<div class="x" style="left:210.75px;top:225.80px;font-size:8.6px;line-height:11px;color:#1d3344;letter-spacing:0.339px;font-weight:bold;">про проходження тренінгу</div>
<div class="x" style="left:193.75px;top:237.50px;font-size:5.2px;line-height:7px;color:#1d3344;letter-spacing:0.422px;font-weight:bold;">для викладачів і співробітників «Teaching success»</div>
<div class="x" style="left:261.50px;top:251.50px;font-size:3.8px;line-height:5px;color:#667;letter-spacing:-0.222px;">Виданий</div>
<div class="x" style="left:181.00px;top:258.30px;font-size:11.2px;line-height:15px;color:#14293a;letter-spacing:0.696px;font-weight:bold;text-shadow:0 0 .6px #14293a;">Сотнік Ольга Володимирівна</div>
<div class="x" style="left:221.00px;top:274.30px;font-size:6.3px;line-height:8px;color:#2a3c50;letter-spacing:0.222px;">з 27.03.2024 р. по 05.06.2024 р.</div>
<div class="x" style="left:220.00px;top:286.30px;font-size:4.4px;line-height:6px;color:#1d3344;letter-spacing:0.387px;font-weight:bold;">у кількості 150 годин (5 кредитів ЄКТС)</div>
<div class="x" style="left:194.00px;top:303.00px;font-size:3.9px;line-height:5px;color:#1d3344;letter-spacing:0.485px;font-weight:bold;">Перший проректор</div>
<div class="x" style="left:312.00px;top:305.00px;font-size:3.9px;line-height:5px;color:#1d3344;letter-spacing:0.460px;font-weight:bold;">Дмитро МАРЧЕНКО</div>
<div class="x" style="left:257.75px;top:317.50px;font-size:4.2px;line-height:5px;color:#1d3344;letter-spacing:0.452px;font-weight:bold;">Київ - 2024</div>
</div>
<div class="a" style="left:133px;top:341.300px;width:274.200px;height:49.500px;background:#4a78cf"></div>
<div class="x" style="left:186.00px;top:356.40px;font-size:14.8px;line-height:19px;color:#2a3d66;letter-spacing:-0.162px;transform:scaleX(0.9);transform-origin:0 50%;">ВРУЧЕННЯ СЕРТИФІКАТІВ</div>
</div></div></div>
<div class="a" style="left:100.5px;top:16.300px;width:115px;height:63.300px;background:#fff;overflow:hidden">
<div class="a" style="left:0;top:0;width:436px;height:246px;transform:scale(0.2638);transform-origin:0 0"><div class="a" style="left:-55px;top:-165px">
<div class="a" style="left:153.500px;top:168px;width:233.500px;height:169px;background:#f5f6f9"></div>
<svg class="a" style="left:55px;top:165px" width="436" height="246" viewBox="55 165 436 246"><path d="M65.600 366Q77 371 78 382.300Q80 372 88.400 365.100Q93 377 87.800 390Q98 380 111.800 376.800Q107 395 89 398.600Q95 406 102 410.500L102 412L90 412Q76 400 70 388Q65 378 65.600 366Z" fill="#e9e0c4"/><path d="M437.900 328.800Q430 342 428 354Q429 360 436 364Q444 368 452 365Q458 361 461 352Q464 344 464.100 338.200L443.700 351.900Q443 340 437.900 328.800Z" fill="#f8e9bf"/><circle cx="461" cy="383.200" r="6.200" fill="#ffe596"/></svg>
<div class="a" style="left:0;top:0;width:0;height:0;transform:rotate(.85deg);transform-origin:271.500px 252px">
<div class="a" style="left:158.900px;top:175.450px;width:225.200px;height:153.100px;border:1.200px solid #3b7cc0;box-shadow:inset 0 0 0 1px #ecd93c;background:#f9fafc"></div>
<svg class="a" style="left:55px;top:165px;overflow:visible" width="436" height="246" viewBox="55 165 436 246"><g transform="translate(159.500 176)"><g fill="#f2c53a"><ellipse cx="22" cy="7.500" rx="3.400" ry="1.250" transform="rotate(-6 22 7.500)"/><ellipse cx="24.500" cy="11" rx="3.600" ry="1.300" transform="rotate(27 24.500 11)"/><ellipse cx="21" cy="11.800" rx="3.200" ry="1.200" transform="rotate(36 21 11.800)"/><circle cx="15.500" cy="9.500" r="1.200"/><circle cx="13" cy="11.300" r=".9"/><circle cx="10.300" cy="14.500" r="1.250"/><ellipse cx="7" cy="21" rx="1.300" ry="3.500" transform="rotate(14 7 21)"/><ellipse cx="11.500" cy="20.500" rx="1.300" ry="3.600" transform="rotate(-26 11.500 20.500)"/><ellipse cx="10.500" cy="25" rx="1.200" ry="3.200" transform="rotate(-20 10.500 25)"/><path d="M8.500 18Q11.500 11.500 20 9" stroke="#f2c53a" stroke-width=".8" fill="none"/></g></g><g transform="translate(383.500 176) scale(-1 1)"><g fill="#f2c53a"><ellipse cx="22" cy="7.500" rx="3.400" ry="1.250" transform="rotate(-6 22 7.500)"/><ellipse cx="24.500" cy="11" rx="3.600" ry="1.300" transform="rotate(27 24.500 11)"/><ellipse cx="21" cy="11.800" rx="3.200" ry="1.200" transform="rotate(36 21 11.800)"/><circle cx="15.500" cy="9.500" r="1.200"/><circle cx="13" cy="11.300" r=".9"/><circle cx="10.300" cy="14.500" r="1.250"/><ellipse cx="7" cy="21" rx="1.300" ry="3.500" transform="rotate(14 7 21)"/><ellipse cx="11.500" cy="20.500" rx="1.300" ry="3.600" transform="rotate(-26 11.500 20.500)"/><ellipse cx="10.500" cy="25" rx="1.200" ry="3.200" transform="rotate(-20 10.500 25)"/><path d="M8.500 18Q11.500 11.500 20 9" stroke="#f2c53a" stroke-width=".8" fill="none"/></g></g><g transform="translate(159.500 328) scale(1 -1)"><g fill="#f2c53a"><ellipse cx="22" cy="7.500" rx="3.400" ry="1.250" transform="rotate(-6 22 7.500)"/><ellipse cx="24.500" cy="11" rx="3.600" ry="1.300" transform="rotate(27 24.500 11)"/><ellipse cx="21" cy="11.800" rx="3.200" ry="1.200" transform="rotate(36 21 11.800)"/><circle cx="15.500" cy="9.500" r="1.200"/><circle cx="13" cy="11.300" r=".9"/><circle cx="10.300" cy="14.500" r="1.250"/><ellipse cx="7" cy="21" rx="1.300" ry="3.500" transform="rotate(14 7 21)"/><ellipse cx="11.500" cy="20.500" rx="1.300" ry="3.600" transform="rotate(-26 11.500 20.500)"/><ellipse cx="10.500" cy="25" rx="1.200" ry="3.200" transform="rotate(-20 10.500 25)"/><path d="M8.500 18Q11.500 11.500 20 9" stroke="#f2c53a" stroke-width=".8" fill="none"/></g></g><g transform="translate(383.500 328) scale(-1 -1)"><g fill="#f2c53a"><ellipse cx="22" cy="7.500" rx="3.400" ry="1.250" transform="rotate(-6 22 7.500)"/><ellipse cx="24.500" cy="11" rx="3.600" ry="1.300" transform="rotate(27 24.500 11)"/><ellipse cx="21" cy="11.800" rx="3.200" ry="1.200" transform="rotate(36 21 11.800)"/><circle cx="15.500" cy="9.500" r="1.200"/><circle cx="13" cy="11.300" r=".9"/><circle cx="10.300" cy="14.500" r="1.250"/><ellipse cx="7" cy="21" rx="1.300" ry="3.500" transform="rotate(14 7 21)"/><ellipse cx="11.500" cy="20.500" rx="1.300" ry="3.600" transform="rotate(-26 11.500 20.500)"/><ellipse cx="10.500" cy="25" rx="1.200" ry="3.200" transform="rotate(-20 10.500 25)"/><path d="M8.500 18Q11.500 11.500 20 9" stroke="#f2c53a" stroke-width=".8" fill="none"/></g></g><g filter="url(#b05)"><path d="M256.500 188.500h11l1 2v1.500h-13v-1.500z" fill="#3a5068"/><path d="M256 193h12v7.500q0 5.500-6 7.500q-6-2-6-7.500z" fill="none" stroke="#3a5068" stroke-width="1.300"/><path d="M258.500 193.500v6.800q0 3.600 3.500 4.800q3.500-1.200 3.500-4.800v-6.800" fill="none" stroke="#3a5068" stroke-width="1"/><text x="262" y="202" font-size="8" font-weight="bold" text-anchor="middle" fill="#c9a227" font-family="Liberation Sans, sans-serif">Е</text><circle cx="284" cy="198" r="8.200" fill="#fbe9dc" stroke="#e8742a" stroke-width="1.800"/><path d="M284 192v11M280.500 195q0 6 3.500 7.500q3.500-1.500 3.500-7.500M278.800 197q.8 4.500 3.700 6M289.200 197q-.8 4.500-3.700 6" stroke="#e8742a" stroke-width=".9" fill="none"/></g><path d="M294 224.500h42" stroke="#8a96c8" stroke-width=".5"/><g fill="none" stroke="#3f6fd8" opacity=".82" filter="url(#b05)"><circle cx="247" cy="311" r="26" stroke-width="1.300"/><circle cx="247" cy="311" r="24" stroke-width=".6"/><circle cx="247" cy="311" r="20" stroke-width="3.400" stroke-dasharray="1.300 .9" opacity=".75"/><circle cx="247" cy="311" r="16" stroke-width=".8"/><path d="M240 301h14v11q0 5-7 8.500q-7-3.500-7-8.500z" fill="#3f6fd8" fill-opacity=".5" stroke-width=".8"/><path d="M247 303.500v13M243.500 304.500v8q2 1 3.500 4q1.500-3 3.500-4v-8" stroke="#e8eefc" stroke-width=".8"/></g><path d="M244 314q14-6 22-12q10-8 14-16q-8 10-14 22q4-8 14-10q12-2 14 4q0 6-14 8" stroke="#5a58c0" stroke-width=".7" fill="none" opacity=".85"/></svg>
<div class="x" style="left:220.30px;top:215.30px;font-size:8.3px;line-height:11px;color:#1d3344;letter-spacing:0.668px;font-weight:bold;text-shadow:0 0 .5px #1d3344;">СЕРТИФІКАТ №</div>
<div class="x" style="left:295.00px;top:215.30px;font-size:7.8px;line-height:10px;color:#3f52c4;letter-spacing:0.124px;text-shadow:0 0 0.4px #3f52c4;font-family:'Liberation Serif',serif;font-style:italic;transform:skewX(-14deg);">11/1408-24</div>
<div class="x" style="left:210.75px;top:225.80px;font-size:8.6px;line-height:11px;color:#1d3344;letter-spacing:0.339px;font-weight:bold;">про проходження тренінгу</div>
<div class="x" style="left:193.75px;top:237.50px;font-size:5.2px;line-height:7px;color:#1d3344;letter-spacing:0.422px;font-weight:bold;">для викладачів і співробітників «Teaching success»</div>
<div class="x" style="left:261.50px;top:251.50px;font-size:3.8px;line-height:5px;color:#667;letter-spacing:-0.222px;">Виданий</div>
<div class="x" style="left:178.50px;top:258.30px;font-size:11.2px;line-height:15px;color:#14293a;letter-spacing:1.367px;font-weight:bold;text-shadow:0 0 .6px #14293a;">Стрижак Тетяні Анатоліївні</div>
<div class="x" style="left:221.00px;top:274.30px;font-size:6.3px;line-height:8px;color:#2a3c50;letter-spacing:0.222px;">з 27.03.2024 р. по 05.06.2024 р.</div>
<div class="x" style="left:220.00px;top:286.30px;font-size:4.4px;line-height:6px;color:#1d3344;letter-spacing:0.387px;font-weight:bold;">у кількості 150 годин (5 кредитів ЄКТС)</div>
<div class="x" style="left:194.00px;top:303.00px;font-size:3.9px;line-height:5px;color:#1d3344;letter-spacing:0.485px;font-weight:bold;">Перший проректор</div>
<div class="x" style="left:312.00px;top:305.00px;font-size:3.9px;line-height:5px;color:#1d3344;letter-spacing:0.460px;font-weight:bold;">Дмитро МАРЧЕНКО</div>
<div class="x" style="left:257.75px;top:317.50px;font-size:4.2px;line-height:5px;color:#1d3344;letter-spacing:0.452px;font-weight:bold;">Київ - 2024</div>
</div>
<div class="a" style="left:133px;top:341.300px;width:274.200px;height:49.500px;background:#4a78cf"></div>
<div class="x" style="left:186.00px;top:356.40px;font-size:14.8px;line-height:19px;color:#2a3d66;letter-spacing:-0.162px;transform:scaleX(0.9);transform-origin:0 50%;">ВРУЧЕННЯ СЕРТИФІКАТІВ</div>
</div></div></div>
<div class="a" style="left:230.9px;top:16.300px;width:115px;height:63.300px;background:#fff;overflow:hidden">
<div class="a" style="left:0;top:0;width:436px;height:246px;transform:scale(0.2638);transform-origin:0 0"><div class="a" style="left:-55px;top:-165px">
<div class="a" style="left:153.500px;top:168px;width:233.500px;height:169px;background:#f5f6f9"></div>
<svg class="a" style="left:55px;top:165px" width="436" height="246" viewBox="55 165 436 246"><path d="M65.600 366Q77 371 78 382.300Q80 372 88.400 365.100Q93 377 87.800 390Q98 380 111.800 376.800Q107 395 89 398.600Q95 406 102 410.500L102 412L90 412Q76 400 70 388Q65 378 65.600 366Z" fill="#e9e0c4"/><path d="M437.900 328.800Q430 342 428 354Q429 360 436 364Q444 368 452 365Q458 361 461 352Q464 344 464.100 338.200L443.700 351.900Q443 340 437.900 328.800Z" fill="#f8e9bf"/><circle cx="461" cy="383.200" r="6.200" fill="#ffe596"/></svg>
<div class="a" style="left:0;top:0;width:0;height:0;transform:rotate(.85deg);transform-origin:271.500px 252px">
<div class="a" style="left:158.900px;top:175.450px;width:225.200px;height:153.100px;border:1.200px solid #3b7cc0;box-shadow:inset 0 0 0 1px #ecd93c;background:#f9fafc"></div>
<svg class="a" style="left:55px;top:165px;overflow:visible" width="436" height="246" viewBox="55 165 436 246"><g transform="translate(159.500 176)"><g fill="#f2c53a"><ellipse cx="22" cy="7.500" rx="3.400" ry="1.250" transform="rotate(-6 22 7.500)"/><ellipse cx="24.500" cy="11" rx="3.600" ry="1.300" transform="rotate(27 24.500 11)"/><ellipse cx="21" cy="11.800" rx="3.200" ry="1.200" transform="rotate(36 21 11.800)"/><circle cx="15.500" cy="9.500" r="1.200"/><circle cx="13" cy="11.300" r=".9"/><circle cx="10.300" cy="14.500" r="1.250"/><ellipse cx="7" cy="21" rx="1.300" ry="3.500" transform="rotate(14 7 21)"/><ellipse cx="11.500" cy="20.500" rx="1.300" ry="3.600" transform="rotate(-26 11.500 20.500)"/><ellipse cx="10.500" cy="25" rx="1.200" ry="3.200" transform="rotate(-20 10.500 25)"/><path d="M8.500 18Q11.500 11.500 20 9" stroke="#f2c53a" stroke-width=".8" fill="none"/></g></g><g transform="translate(383.500 176) scale(-1 1)"><g fill="#f2c53a"><ellipse cx="22" cy="7.500" rx="3.400" ry="1.250" transform="rotate(-6 22 7.500)"/><ellipse cx="24.500" cy="11" rx="3.600" ry="1.300" transform="rotate(27 24.500 11)"/><ellipse cx="21" cy="11.800" rx="3.200" ry="1.200" transform="rotate(36 21 11.800)"/><circle cx="15.500" cy="9.500" r="1.200"/><circle cx="13" cy="11.300" r=".9"/><circle cx="10.300" cy="14.500" r="1.250"/><ellipse cx="7" cy="21" rx="1.300" ry="3.500" transform="rotate(14 7 21)"/><ellipse cx="11.500" cy="20.500" rx="1.300" ry="3.600" transform="rotate(-26 11.500 20.500)"/><ellipse cx="10.500" cy="25" rx="1.200" ry="3.200" transform="rotate(-20 10.500 25)"/><path d="M8.500 18Q11.500 11.500 20 9" stroke="#f2c53a" stroke-width=".8" fill="none"/></g></g><g transform="translate(159.500 328) scale(1 -1)"><g fill="#f2c53a"><ellipse cx="22" cy="7.500" rx="3.400" ry="1.250" transform="rotate(-6 22 7.500)"/><ellipse cx="24.500" cy="11" rx="3.600" ry="1.300" transform="rotate(27 24.500 11)"/><ellipse cx="21" cy="11.800" rx="3.200" ry="1.200" transform="rotate(36 21 11.800)"/><circle cx="15.500" cy="9.500" r="1.200"/><circle cx="13" cy="11.300" r=".9"/><circle cx="10.300" cy="14.500" r="1.250"/><ellipse cx="7" cy="21" rx="1.300" ry="3.500" transform="rotate(14 7 21)"/><ellipse cx="11.500" cy="20.500" rx="1.300" ry="3.600" transform="rotate(-26 11.500 20.500)"/><ellipse cx="10.500" cy="25" rx="1.200" ry="3.200" transform="rotate(-20 10.500 25)"/><path d="M8.500 18Q11.500 11.500 20 9" stroke="#f2c53a" stroke-width=".8" fill="none"/></g></g><g transform="translate(383.500 328) scale(-1 -1)"><g fill="#f2c53a"><ellipse cx="22" cy="7.500" rx="3.400" ry="1.250" transform="rotate(-6 22 7.500)"/><ellipse cx="24.500" cy="11" rx="3.600" ry="1.300" transform="rotate(27 24.500 11)"/><ellipse cx="21" cy="11.800" rx="3.200" ry="1.200" transform="rotate(36 21 11.800)"/><circle cx="15.500" cy="9.500" r="1.200"/><circle cx="13" cy="11.300" r=".9"/><circle cx="10.300" cy="14.500" r="1.250"/><ellipse cx="7" cy="21" rx="1.300" ry="3.500" transform="rotate(14 7 21)"/><ellipse cx="11.500" cy="20.500" rx="1.300" ry="3.600" transform="rotate(-26 11.500 20.500)"/><ellipse cx="10.500" cy="25" rx="1.200" ry="3.200" transform="rotate(-20 10.500 25)"/><path d="M8.500 18Q11.500 11.500 20 9" stroke="#f2c53a" stroke-width=".8" fill="none"/></g></g><g filter="url(#b05)"><path d="M256.500 188.500h11l1 2v1.500h-13v-1.500z" fill="#3a5068"/><path d="M256 193h12v7.500q0 5.500-6 7.500q-6-2-6-7.500z" fill="none" stroke="#3a5068" stroke-width="1.300"/><path d="M258.500 193.500v6.800q0 3.600 3.500 4.800q3.500-1.200 3.500-4.800v-6.800" fill="none" stroke="#3a5068" stroke-width="1"/><text x="262" y="202" font-size="8" font-weight="bold" text-anchor="middle" fill="#c9a227" font-family="Liberation Sans, sans-serif">Е</text><circle cx="284" cy="198" r="8.200" fill="#fbe9dc" stroke="#e8742a" stroke-width="1.800"/><path d="M284 192v11M280.500 195q0 6 3.500 7.500q3.500-1.500 3.500-7.500M278.800 197q.8 4.500 3.700 6M289.200 197q-.8 4.500-3.700 6" stroke="#e8742a" stroke-width=".9" fill="none"/></g><path d="M294 224.500h42" stroke="#8a96c8" stroke-width=".5"/><g fill="none" stroke="#3f6fd8" opacity=".82" filter="url(#b05)"><circle cx="247" cy="311" r="26" stroke-width="1.300"/><circle cx="247" cy="311" r="24" stroke-width=".6"/><circle cx="247" cy="311" r="20" stroke-width="3.400" stroke-dasharray="1.300 .9" opacity=".75"/><circle cx="247" cy="311" r="16" stroke-width=".8"/><path d="M240 301h14v11q0 5-7 8.500q-7-3.500-7-8.500z" fill="#3f6fd8" fill-opacity=".5" stroke-width=".8"/><path d="M247 303.500v13M243.500 304.500v8q2 1 3.500 4q1.500-3 3.500-4v-8" stroke="#e8eefc" stroke-width=".8"/></g><path d="M244 314q14-6 22-12q10-8 14-16q-8 10-14 22q4-8 14-10q12-2 14 4q0 6-14 8" stroke="#5a58c0" stroke-width=".7" fill="none" opacity=".85"/></svg>
<div class="x" style="left:220.30px;top:215.30px;font-size:8.3px;line-height:11px;color:#1d3344;letter-spacing:0.668px;font-weight:bold;text-shadow:0 0 .5px #1d3344;">СЕРТИФІКАТ №</div>
<div class="x" style="left:295.00px;top:215.30px;font-size:7.8px;line-height:10px;color:#3f52c4;letter-spacing:0.124px;text-shadow:0 0 0.4px #3f52c4;font-family:'Liberation Serif',serif;font-style:italic;transform:skewX(-14deg);">11/1408-24</div>
<div class="x" style="left:210.75px;top:225.80px;font-size:8.6px;line-height:11px;color:#1d3344;letter-spacing:0.339px;font-weight:bold;">про проходження тренінгу</div>
<div class="x" style="left:193.75px;top:237.50px;font-size:5.2px;line-height:7px;color:#1d3344;letter-spacing:0.422px;font-weight:bold;">для викладачів і співробітників «Teaching success»</div>
<div class="x" style="left:261.50px;top:251.50px;font-size:3.8px;line-height:5px;color:#667;letter-spacing:-0.222px;">Виданий</div>
<div class="x" style="left:182.00px;top:258.30px;font-size:11.2px;line-height:15px;color:#14293a;letter-spacing:1.427px;font-weight:bold;text-shadow:0 0 .6px #14293a;">Ткаченко Юлії Анатоліївні</div>
<div class="x" style="left:221.00px;top:274.30px;font-size:6.3px;line-height:8px;color:#2a3c50;letter-spacing:0.222px;">з 27.03.2024 р. по 05.06.2024 р.</div>
<div class="x" style="left:220.00px;top:286.30px;font-size:4.4px;line-height:6px;color:#1d3344;letter-spacing:0.387px;font-weight:bold;">у кількості 150 годин (5 кредитів ЄКТС)</div>
<div class="x" style="left:194.00px;top:303.00px;font-size:3.9px;line-height:5px;color:#1d3344;letter-spacing:0.485px;font-weight:bold;">Перший проректор</div>
<div class="x" style="left:312.00px;top:305.00px;font-size:3.9px;line-height:5px;color:#1d3344;letter-spacing:0.460px;font-weight:bold;">Дмитро МАРЧЕНКО</div>
<div class="x" style="left:257.75px;top:317.50px;font-size:4.2px;line-height:5px;color:#1d3344;letter-spacing:0.452px;font-weight:bold;">Київ - 2024</div>
</div>
<div class="a" style="left:133px;top:341.300px;width:274.200px;height:49.500px;background:#4a78cf"></div>
<div class="x" style="left:186.00px;top:356.40px;font-size:14.8px;line-height:19px;color:#2a3d66;letter-spacing:-0.162px;transform:scaleX(0.9);transform-origin:0 50%;">ВРУЧЕННЯ СЕРТИФІКАТІВ</div>
</div></div></div>
<div class="a" style="left:361.3px;top:16.300px;width:115px;height:63.300px;background:#fff;overflow:hidden">
<div class="a" style="left:0;top:0;width:436px;height:246px;transform:scale(0.2638);transform-origin:0 0"><div class="a" style="left:-55px;top:-165px">
<div class="a" style="left:153.500px;top:168px;width:233.500px;height:169px;background:#f5f6f9"></div>
<svg class="a" style="left:55px;top:165px" width="436" height="246" viewBox="55 165 436 246"><path d="M65.600 366Q77 371 78 382.300Q80 372 88.400 365.100Q93 377 87.800 390Q98 380 111.800 376.800Q107 395 89 398.600Q95 406 102 410.500L102 412L90 412Q76 400 70 388Q65 378 65.600 366Z" fill="#e9e0c4"/><path d="M437.900 328.800Q430 342 428 354Q429 360 436 364Q444 368 452 365Q458 361 461 352Q464 344 464.100 338.200L443.700 351.900Q443 340 437.900 328.800Z" fill="#f8e9bf"/><circle cx="461" cy="383.200" r="6.200" fill="#ffe596"/></svg>
<div class="a" style="left:0;top:0;width:0;height:0;transform:rotate(.85deg);transform-origin:271.500px 252px">
<div class="a" style="left:158.900px;top:175.450px;width:225.200px;height:153.100px;border:1.200px solid #3b7cc0;box-shadow:inset 0 0 0 1px #ecd93c;background:#f9fafc"></div>
<svg class="a" style="left:55px;top:165px;overflow:visible" width="436" height="246" viewBox="55 165 436 246"><g transform="translate(159.500 176)"><g fill="#f2c53a"><ellipse cx="22" cy="7.500" rx="3.400" ry="1.250" transform="rotate(-6 22 7.500)"/><ellipse cx="24.500" cy="11" rx="3.600" ry="1.300" transform="rotate(27 24.500 11)"/><ellipse cx="21" cy="11.800" rx="3.200" ry="1.200" transform="rotate(36 21 11.800)"/><circle cx="15.500" cy="9.500" r="1.200"/><circle cx="13" cy="11.300" r=".9"/><circle cx="10.300" cy="14.500" r="1.250"/><ellipse cx="7" cy="21" rx="1.300" ry="3.500" transform="rotate(14 7 21)"/><ellipse cx="11.500" cy="20.500" rx="1.300" ry="3.600" transform="rotate(-26 11.500 20.500)"/><ellipse cx="10.500" cy="25" rx="1.200" ry="3.200" transform="rotate(-20 10.500 25)"/><path d="M8.500 18Q11.500 11.500 20 9" stroke="#f2c53a" stroke-width=".8" fill="none"/></g></g><g transform="translate(383.500 176) scale(-1 1)"><g fill="#f2c53a"><ellipse cx="22" cy="7.500" rx="3.400" ry="1.250" transform="rotate(-6 22 7.500)"/><ellipse cx="24.500" cy="11" rx="3.600" ry="1.300" transform="rotate(27 24.500 11)"/><ellipse cx="21" cy="11.800" rx="3.200" ry="1.200" transform="rotate(36 21 11.800)"/><circle cx="15.500" cy="9.500" r="1.200"/><circle cx="13" cy="11.300" r=".9"/><circle cx="10.300" cy="14.500" r="1.250"/><ellipse cx="7" cy="21" rx="1.300" ry="3.500" transform="rotate(14 7 21)"/><ellipse cx="11.500" cy="20.500" rx="1.300" ry="3.600" transform="rotate(-26 11.500 20.500)"/><ellipse cx="10.500" cy="25" rx="1.200" ry="3.200" transform="rotate(-20 10.500 25)"/><path d="M8.500 18Q11.500 11.500 20 9" stroke="#f2c53a" stroke-width=".8" fill="none"/></g></g><g transform="translate(159.500 328) scale(1 -1)"><g fill="#f2c53a"><ellipse cx="22" cy="7.500" rx="3.400" ry="1.250" transform="rotate(-6 22 7.500)"/><ellipse cx="24.500" cy="11" rx="3.600" ry="1.300" transform="rotate(27 24.500 11)"/><ellipse cx="21" cy="11.800" rx="3.200" ry="1.200" transform="rotate(36 21 11.800)"/><circle cx="15.500" cy="9.500" r="1.200"/><circle cx="13" cy="11.300" r=".9"/><circle cx="10.300" cy="14.500" r="1.250"/><ellipse cx="7" cy="21" rx="1.300" ry="3.500" transform="rotate(14 7 21)"/><ellipse cx="11.500" cy="20.500" rx="1.300" ry="3.600" transform="rotate(-26 11.500 20.500)"/><ellipse cx="10.500" cy="25" rx="1.200" ry="3.200" transform="rotate(-20 10.500 25)"/><path d="M8.500 18Q11.500 11.500 20 9" stroke="#f2c53a" stroke-width=".8" fill="none"/></g></g><g transform="translate(383.500 328) scale(-1 -1)"><g fill="#f2c53a"><ellipse cx="22" cy="7.500" rx="3.400" ry="1.250" transform="rotate(-6 22 7.500)"/><ellipse cx="24.500" cy="11" rx="3.600" ry="1.300" transform="rotate(27 24.500 11)"/><ellipse cx="21" cy="11.800" rx="3.200" ry="1.200" transform="rotate(36 21 11.800)"/><circle cx="15.500" cy="9.500" r="1.200"/><circle cx="13" cy="11.300" r=".9"/><circle cx="10.300" cy="14.500" r="1.250"/><ellipse cx="7" cy="21" rx="1.300" ry="3.500" transform="rotate(14 7 21)"/><ellipse cx="11.500" cy="20.500" rx="1.300" ry="3.600" transform="rotate(-26 11.500 20.500)"/><ellipse cx="10.500" cy="25" rx="1.200" ry="3.200" transform="rotate(-20 10.500 25)"/><path d="M8.500 18Q11.500 11.500 20 9" stroke="#f2c53a" stroke-width=".8" fill="none"/></g></g><g filter="url(#b05)"><path d="M256.500 188.500h11l1 2v1.500h-13v-1.500z" fill="#3a5068"/><path d="M256 193h12v7.500q0 5.500-6 7.500q-6-2-6-7.500z" fill="none" stroke="#3a5068" stroke-width="1.300"/><path d="M258.500 193.500v6.800q0 3.600 3.500 4.800q3.500-1.200 3.500-4.800v-6.800" fill="none" stroke="#3a5068" stroke-width="1"/><text x="262" y="202" font-size="8" font-weight="bold" text-anchor="middle" fill="#c9a227" font-family="Liberation Sans, sans-serif">Е</text><circle cx="284" cy="198" r="8.200" fill="#fbe9dc" stroke="#e8742a" stroke-width="1.800"/><path d="M284 192v11M280.500 195q0 6 3.500 7.500q3.500-1.500 3.500-7.500M278.800 197q.8 4.500 3.700 6M289.200 197q-.8 4.500-3.700 6" stroke="#e8742a" stroke-width=".9" fill="none"/></g><path d="M294 224.500h42" stroke="#8a96c8" stroke-width=".5"/><g fill="none" stroke="#3f6fd8" opacity=".82" filter="url(#b05)"><circle cx="247" cy="311" r="26" stroke-width="1.300"/><circle cx="247" cy="311" r="24" stroke-width=".6"/><circle cx="247" cy="311" r="20" stroke-width="3.400" stroke-dasharray="1.300 .9" opacity=".75"/><circle cx="247" cy="311" r="16" stroke-width=".8"/><path d="M240 301h14v11q0 5-7 8.500q-7-3.500-7-8.500z" fill="#3f6fd8" fill-opacity=".5" stroke-width=".8"/><path d="M247 303.500v13M243.500 304.500v8q2 1 3.500 4q1.500-3 3.500-4v-8" stroke="#e8eefc" stroke-width=".8"/></g><path d="M244 314q14-6 22-12q10-8 14-16q-8 10-14 22q4-8 14-10q12-2 14 4q0 6-14 8" stroke="#5a58c0" stroke-width=".7" fill="none" opacity=".85"/></svg>
<div class="x" style="left:220.30px;top:215.30px;font-size:8.3px;line-height:11px;color:#1d3344;letter-spacing:0.668px;font-weight:bold;text-shadow:0 0 .5px #1d3344;">СЕРТИФІКАТ №</div>
<div class="x" style="left:295.00px;top:215.30px;font-size:7.8px;line-height:10px;color:#3f52c4;letter-spacing:0.124px;text-shadow:0 0 0.4px #3f52c4;font-family:'Liberation Serif',serif;font-style:italic;transform:skewX(-14deg);">11/1408-24</div>
<div class="x" style="left:210.75px;top:225.80px;font-size:8.6px;line-height:11px;color:#1d3344;letter-spacing:0.339px;font-weight:bold;">про проходження тренінгу</div>
<div class="x" style="left:193.75px;top:237.50px;font-size:5.2px;line-height:7px;color:#1d3344;letter-spacing:0.422px;font-weight:bold;">для викладачів і співробітників «Teaching success»</div>
<div class="x" style="left:261.50px;top:251.50px;font-size:3.8px;line-height:5px;color:#667;letter-spacing:-0.222px;">Виданий</div>
<div class="x" style="left:177.00px;top:258.30px;font-size:11.2px;line-height:15px;color:#14293a;letter-spacing:1.088px;font-weight:bold;text-shadow:0 0 .6px #14293a;">Халіну Сергію Федосійовичу</div>
<div class="x" style="left:221.00px;top:274.30px;font-size:6.3px;line-height:8px;color:#2a3c50;letter-spacing:0.222px;">з 27.03.2024 р. по 05.06.2024 р.</div>
<div class="x" style="left:220.00px;top:286.30px;font-size:4.4px;line-height:6px;color:#1d3344;letter-spacing:0.387px;font-weight:bold;">у кількості 150 годин (5 кредитів ЄКТС)</div>
<div class="x" style="left:194.00px;top:303.00px;font-size:3.9px;line-height:5px;color:#1d3344;letter-spacing:0.485px;font-weight:bold;">Перший проректор</div>
<div class="x" style="left:312.00px;top:305.00px;font-size:3.9px;line-height:5px;color:#1d3344;letter-spacing:0.460px;font-weight:bold;">Дмитро МАРЧЕНКО</div>
<div class="x" style="left:257.75px;top:317.50px;font-size:4.2px;line-height:5px;color:#1d3344;letter-spacing:0.452px;font-weight:bold;">Київ - 2024</div>
</div>
<div class="a" style="left:133px;top:341.300px;width:274.200px;height:49.500px;background:#4a78cf"></div>
<div class="x" style="left:186.00px;top:356.40px;font-size:14.8px;line-height:19px;color:#2a3d66;letter-spacing:-0.162px;transform:scaleX(0.9);transform-origin:0 50%;">ВРУЧЕННЯ СЕРТИФІКАТІВ</div>
</div></div></div>
<div class="a" style="left:492.5px;top:16.300px;width:115px;height:63.300px;background:#fff;overflow:hidden">
<div class="a" style="left:0;top:0;width:436px;height:246px;transform:scale(0.2638);transform-origin:0 0"><div class="a" style="left:-55px;top:-165px">
<div class="a" style="left:153.500px;top:168px;width:233.500px;height:169px;background:#f5f6f9"></div>
<svg class="a" style="left:55px;top:165px" width="436" height="246" viewBox="55 165 436 246"><path d="M65.600 366Q77 371 78 382.300Q80 372 88.400 365.100Q93 377 87.800 390Q98 380 111.800 376.800Q107 395 89 398.600Q95 406 102 410.500L102 412L90 412Q76 400 70 388Q65 378 65.600 366Z" fill="#e9e0c4"/><path d="M437.900 328.800Q430 342 428 354Q429 360 436 364Q444 368 452 365Q458 361 461 352Q464 344 464.100 338.200L443.700 351.900Q443 340 437.900 328.800Z" fill="#f8e9bf"/><circle cx="461" cy="383.200" r="6.200" fill="#ffe596"/></svg>
<div class="a" style="left:0;top:0;width:0;height:0;transform:rotate(.85deg);transform-origin:271.500px 252px">
<div class="a" style="left:158.900px;top:175.450px;width:225.200px;height:153.100px;border:1.200px solid #3b7cc0;box-shadow:inset 0 0 0 1px #ecd93c;background:#f9fafc"></div>
<svg class="a" style="left:55px;top:165px;overflow:visible" width="436" height="246" viewBox="55 165 436 246"><g transform="translate(159.500 176)"><g fill="#f2c53a"><ellipse cx="22" cy="7.500" rx="3.400" ry="1.250" transform="rotate(-6 22 7.500)"/><ellipse cx="24.500" cy="11" rx="3.600" ry="1.300" transform="rotate(27 24.500 11)"/><ellipse cx="21" cy="11.800" rx="3.200" ry="1.200" transform="rotate(36 21 11.800)"/><circle cx="15.500" cy="9.500" r="1.200"/><circle cx="13" cy="11.300" r=".9"/><circle cx="10.300" cy="14.500" r="1.250"/><ellipse cx="7" cy="21" rx="1.300" ry="3.500" transform="rotate(14 7 21)"/><ellipse cx="11.500" cy="20.500" rx="1.300" ry="3.600" transform="rotate(-26 11.500 20.500)"/><ellipse cx="10.500" cy="25" rx="1.200" ry="3.200" transform="rotate(-20 10.500 25)"/><path d="M8.500 18Q11.500 11.500 20 9" stroke="#f2c53a" stroke-width=".8" fill="none"/></g></g><g transform="translate(383.500 176) scale(-1 1)"><g fill="#f2c53a"><ellipse cx="22" cy="7.500" rx="3.400" ry="1.250" transform="rotate(-6 22 7.500)"/><ellipse cx="24.500" cy="11" rx="3.600" ry="1.300" transform="rotate(27 24.500 11)"/><ellipse cx="21" cy="11.800" rx="3.200" ry="1.200" transform="rotate(36 21 11.800)"/><circle cx="15.500" cy="9.500" r="1.200"/><circle cx="13" cy="11.300" r=".9"/><circle cx="10.300" cy="14.500" r="1.250"/><ellipse cx="7" cy="21" rx="1.300" ry="3.500" transform="rotate(14 7 21)"/><ellipse cx="11.500" cy="20.500" rx="1.300" ry="3.600" transform="rotate(-26 11.500 20.500)"/><ellipse cx="10.500" cy="25" rx="1.200" ry="3.200" transform="rotate(-20 10.500 25)"/><path d="M8.500 18Q11.500 11.500 20 9" stroke="#f2c53a" stroke-width=".8" fill="none"/></g></g><g transform="translate(159.500 328) scale(1 -1)"><g fill="#f2c53a"><ellipse cx="22" cy="7.500" rx="3.400" ry="1.250" transform="rotate(-6 22 7.500)"/><ellipse cx="24.500" cy="11" rx="3.600" ry="1.300" transform="rotate(27 24.500 11)"/><ellipse cx="21" cy="11.800" rx="3.200" ry="1.200" transform="rotate(36 21 11.800)"/><circle cx="15.500" cy="9.500" r="1.200"/><circle cx="13" cy="11.300" r=".9"/><circle cx="10.300" cy="14.500" r="1.250"/><ellipse cx="7" cy="21" rx="1.300" ry="3.500" transform="rotate(14 7 21)"/><ellipse cx="11.500" cy="20.500" rx="1.300" ry="3.600" transform="rotate(-26 11.500 20.500)"/><ellipse cx="10.500" cy="25" rx="1.200" ry="3.200" transform="rotate(-20 10.500 25)"/><path d="M8.500 18Q11.500 11.500 20 9" stroke="#f2c53a" stroke-width=".8" fill="none"/></g></g><g transform="translate(383.500 328) scale(-1 -1)"><g fill="#f2c53a"><ellipse cx="22" cy="7.500" rx="3.400" ry="1.250" transform="rotate(-6 22 7.500)"/><ellipse cx="24.500" cy="11" rx="3.600" ry="1.300" transform="rotate(27 24.500 11)"/><ellipse cx="21" cy="11.800" rx="3.200" ry="1.200" transform="rotate(36 21 11.800)"/><circle cx="15.500" cy="9.500" r="1.200"/><circle cx="13" cy="11.300" r=".9"/><circle cx="10.300" cy="14.500" r="1.250"/><ellipse cx="7" cy="21" rx="1.300" ry="3.500" transform="rotate(14 7 21)"/><ellipse cx="11.500" cy="20.500" rx="1.300" ry="3.600" transform="rotate(-26 11.500 20.500)"/><ellipse cx="10.500" cy="25" rx="1.200" ry="3.200" transform="rotate(-20 10.500 25)"/><path d="M8.500 18Q11.500 11.500 20 9" stroke="#f2c53a" stroke-width=".8" fill="none"/></g></g><g filter="url(#b05)"><path d="M256.500 188.500h11l1 2v1.500h-13v-1.500z" fill="#3a5068"/><path d="M256 193h12v7.500q0 5.500-6 7.500q-6-2-6-7.500z" fill="none" stroke="#3a5068" stroke-width="1.300"/><path d="M258.500 193.500v6.800q0 3.600 3.500 4.800q3.500-1.200 3.500-4.800v-6.800" fill="none" stroke="#3a5068" stroke-width="1"/><text x="262" y="202" font-size="8" font-weight="bold" text-anchor="middle" fill="#c9a227" font-family="Liberation Sans, sans-serif">Е</text><circle cx="284" cy="198" r="8.200" fill="#fbe9dc" stroke="#e8742a" stroke-width="1.800"/><path d="M284 192v11M280.500 195q0 6 3.500 7.500q3.500-1.500 3.500-7.500M278.800 197q.8 4.500 3.700 6M289.200 197q-.8 4.500-3.700 6" stroke="#e8742a" stroke-width=".9" fill="none"/></g><path d="M294 224.500h42" stroke="#8a96c8" stroke-width=".5"/><g fill="none" stroke="#3f6fd8" opacity=".82" filter="url(#b05)"><circle cx="247" cy="311" r="26" stroke-width="1.300"/><circle cx="247" cy="311" r="24" stroke-width=".6"/><circle cx="247" cy="311" r="20" stroke-width="3.400" stroke-dasharray="1.300 .9" opacity=".75"/><circle cx="247" cy="311" r="16" stroke-width=".8"/><path d="M240 301h14v11q0 5-7 8.500q-7-3.500-7-8.500z" fill="#3f6fd8" fill-opacity=".5" stroke-width=".8"/><path d="M247 303.500v13M243.500 304.500v8q2 1 3.500 4q1.500-3 3.500-4v-8" stroke="#e8eefc" stroke-width=".8"/></g><path d="M244 314q14-6 22-12q10-8 14-16q-8 10-14 22q4-8 14-10q12-2 14 4q0 6-14 8" stroke="#5a58c0" stroke-width=".7" fill="none" opacity=".85"/></svg>
<div class="x" style="left:220.30px;top:215.30px;font-size:8.3px;line-height:11px;color:#1d3344;letter-spacing:0.668px;font-weight:bold;text-shadow:0 0 .5px #1d3344;">СЕРТИФІКАТ №</div>
<div class="x" style="left:295.00px;top:215.30px;font-size:7.8px;line-height:10px;color:#3f52c4;letter-spacing:0.124px;text-shadow:0 0 0.4px #3f52c4;font-family:'Liberation Serif',serif;font-style:italic;transform:skewX(-14deg);">11/1408-24</div>
<div class="x" style="left:210.75px;top:225.80px;font-size:8.6px;line-height:11px;color:#1d3344;letter-spacing:0.339px;font-weight:bold;">про проходження тренінгу</div>
<div class="x" style="left:193.75px;top:237.50px;font-size:5.2px;line-height:7px;color:#1d3344;letter-spacing:0.422px;font-weight:bold;">для викладачів і співробітників «Teaching success»</div>
<div class="x" style="left:261.50px;top:251.50px;font-size:3.8px;line-height:5px;color:#667;letter-spacing:-0.222px;">Виданий</div>
<div class="x" style="left:169.00px;top:258.30px;font-size:11.2px;line-height:15px;color:#14293a;letter-spacing:0.771px;font-weight:bold;text-shadow:0 0 .6px #14293a;">Чаплигіну Євгену Миколайовичу</div>
<div class="x" style="left:221.00px;top:274.30px;font-size:6.3px;line-height:8px;color:#2a3c50;letter-spacing:0.222px;">з 27.03.2024 р. по 05.06.2024 р.</div>
<div class="x" style="left:220.00px;top:286.30px;font-size:4.4px;line-height:6px;color:#1d3344;letter-spacing:0.387px;font-weight:bold;">у кількості 150 годин (5 кредитів ЄКТС)</div>
<div class="x" style="left:194.00px;top:303.00px;font-size:3.9px;line-height:5px;color:#1d3344;letter-spacing:0.485px;font-weight:bold;">Перший проректор</div>
<div class="x" style="left:312.00px;top:305.00px;font-size:3.9px;line-height:5px;color:#1d3344;letter-spacing:0.460px;font-weight:bold;">Дмитро МАРЧЕНКО</div>
<div class="x" style="left:257.75px;top:317.50px;font-size:4.2px;line-height:5px;color:#1d3344;letter-spacing:0.452px;font-weight:bold;">Київ - 2024</div>
</div>
<div class="a" style="left:133px;top:341.300px;width:274.200px;height:49.500px;background:#4a78cf"></div>
<div class="x" style="left:186.00px;top:356.40px;font-size:14.8px;line-height:19px;color:#2a3d66;letter-spacing:-0.162px;transform:scaleX(0.9);transform-origin:0 50%;">ВРУЧЕННЯ СЕРТИФІКАТІВ</div>
</div></div></div>
<div class="a" style="left:623.5px;top:16.300px;width:115px;height:63.300px;background:#fff;overflow:hidden">
<div class="a" style="left:0;top:0;width:436px;height:246px;transform:scale(0.2638);transform-origin:0 0"><div class="a" style="left:-55px;top:-165px">
<div class="a" style="left:153.500px;top:168px;width:233.500px;height:169px;background:#f5f6f9"></div>
<svg class="a" style="left:55px;top:165px" width="436" height="246" viewBox="55 165 436 246"><path d="M65.600 366Q77 371 78 382.300Q80 372 88.400 365.100Q93 377 87.800 390Q98 380 111.800 376.800Q107 395 89 398.600Q95 406 102 410.500L102 412L90 412Q76 400 70 388Q65 378 65.600 366Z" fill="#e9e0c4"/><path d="M437.900 328.800Q430 342 428 354Q429 360 436 364Q444 368 452 365Q458 361 461 352Q464 344 464.100 338.200L443.700 351.900Q443 340 437.900 328.800Z" fill="#f8e9bf"/><circle cx="461" cy="383.200" r="6.200" fill="#ffe596"/></svg>
<div class="a" style="left:0;top:0;width:0;height:0;transform:rotate(.85deg);transform-origin:271.500px 252px">
<div class="a" style="left:158.900px;top:175.450px;width:225.200px;height:153.100px;border:1.200px solid #3b7cc0;box-shadow:inset 0 0 0 1px #ecd93c;background:#f9fafc"></div>
<svg class="a" style="left:55px;top:165px;overflow:visible" width="436" height="246" viewBox="55 165 436 246"><g transform="translate(159.500 176)"><g fill="#f2c53a"><ellipse cx="22" cy="7.500" rx="3.400" ry="1.250" transform="rotate(-6 22 7.500)"/><ellipse cx="24.500" cy="11" rx="3.600" ry="1.300" transform="rotate(27 24.500 11)"/><ellipse cx="21" cy="11.800" rx="3.200" ry="1.200" transform="rotate(36 21 11.800)"/><circle cx="15.500" cy="9.500" r="1.200"/><circle cx="13" cy="11.300" r=".9"/><circle cx="10.300" cy="14.500" r="1.250"/><ellipse cx="7" cy="21" rx="1.300" ry="3.500" transform="rotate(14 7 21)"/><ellipse cx="11.500" cy="20.500" rx="1.300" ry="3.600" transform="rotate(-26 11.500 20.500)"/><ellipse cx="10.500" cy="25" rx="1.200" ry="3.200" transform="rotate(-20 10.500 25)"/><path d="M8.500 18Q11.500 11.500 20 9" stroke="#f2c53a" stroke-width=".8" fill="none"/></g></g><g transform="translate(383.500 176) scale(-1 1)"><g fill="#f2c53a"><ellipse cx="22" cy="7.500" rx="3.400" ry="1.250" transform="rotate(-6 22 7.500)"/><ellipse cx="24.500" cy="11" rx="3.600" ry="1.300" transform="rotate(27 24.500 11)"/><ellipse cx="21" cy="11.800" rx="3.200" ry="1.200" transform="rotate(36 21 11.800)"/><circle cx="15.500" cy="9.500" r="1.200"/><circle cx="13" cy="11.300" r=".9"/><circle cx="10.300" cy="14.500" r="1.250"/><ellipse cx="7" cy="21" rx="1.300" ry="3.500" transform="rotate(14 7 21)"/><ellipse cx="11.500" cy="20.500" rx="1.300" ry="3.600" transform="rotate(-26 11.500 20.500)"/><ellipse cx="10.500" cy="25" rx="1.200" ry="3.200" transform="rotate(-20 10.500 25)"/><path d="M8.500 18Q11.500 11.500 20 9" stroke="#f2c53a" stroke-width=".8" fill="none"/></g></g><g transform="translate(159.500 328) scale(1 -1)"><g fill="#f2c53a"><ellipse cx="22" cy="7.500" rx="3.400" ry="1.250" transform="rotate(-6 22 7.500)"/><ellipse cx="24.500" cy="11" rx="3.600" ry="1.300" transform="rotate(27 24.500 11)"/><ellipse cx="21" cy="11.800" rx="3.200" ry="1.200" transform="rotate(36 21 11.800)"/><circle cx="15.500" cy="9.500" r="1.200"/><circle cx="13" cy="11.300" r=".9"/><circle cx="10.300" cy="14.500" r="1.250"/><ellipse cx="7" cy="21" rx="1.300" ry="3.500" transform="rotate(14 7 21)"/><ellipse cx="11.500" cy="20.500" rx="1.300" ry="3.600" transform="rotate(-26 11.500 20.500)"/><ellipse cx="10.500" cy="25" rx="1.200" ry="3.200" transform="rotate(-20 10.500 25)"/><path d="M8.500 18Q11.500 11.500 20 9" stroke="#f2c53a" stroke-width=".8" fill="none"/></g></g><g transform="translate(383.500 328) scale(-1 -1)"><g fill="#f2c53a"><ellipse cx="22" cy="7.500" rx="3.400" ry="1.250" transform="rotate(-6 22 7.500)"/><ellipse cx="24.500" cy="11" rx="3.600" ry="1.300" transform="rotate(27 24.500 11)"/><ellipse cx="21" cy="11.800" rx="3.200" ry="1.200" transform="rotate(36 21 11.800)"/><circle cx="15.500" cy="9.500" r="1.200"/><circle cx="13" cy="11.300" r=".9"/><circle cx="10.300" cy="14.500" r="1.250"/><ellipse cx="7" cy="21" rx="1.300" ry="3.500" transform="rotate(14 7 21)"/><ellipse cx="11.500" cy="20.500" rx="1.300" ry="3.600" transform="rotate(-26 11.500 20.500)"/><ellipse cx="10.500" cy="25" rx="1.200" ry="3.200" transform="rotate(-20 10.500 25)"/><path d="M8.500 18Q11.500 11.500 20 9" stroke="#f2c53a" stroke-width=".8" fill="none"/></g></g><g filter="url(#b05)"><path d="M256.500 188.500h11l1 2v1.500h-13v-1.500z" fill="#3a5068"/><path d="M256 193h12v7.500q0 5.500-6 7.500q-6-2-6-7.500z" fill="none" stroke="#3a5068" stroke-width="1.300"/><path d="M258.500 193.500v6.800q0 3.600 3.500 4.800q3.500-1.200 3.500-4.800v-6.800" fill="none" stroke="#3a5068" stroke-width="1"/><text x="262" y="202" font-size="8" font-weight="bold" text-anchor="middle" fill="#c9a227" font-family="Liberation Sans, sans-serif">Е</text><circle cx="284" cy="198" r="8.200" fill="#fbe9dc" stroke="#e8742a" stroke-width="1.800"/><path d="M284 192v11M280.500 195q0 6 3.500 7.500q3.500-1.500 3.500-7.500M278.800 197q.8 4.500 3.700 6M289.200 197q-.8 4.500-3.700 6" stroke="#e8742a" stroke-width=".9" fill="none"/></g><path d="M294 224.500h42" stroke="#8a96c8" stroke-width=".5"/><g fill="none" stroke="#3f6fd8" opacity=".82" filter="url(#b05)"><circle cx="247" cy="311" r="26" stroke-width="1.300"/><circle cx="247" cy="311" r="24" stroke-width=".6"/><circle cx="247" cy="311" r="20" stroke-width="3.400" stroke-dasharray="1.300 .9" opacity=".75"/><circle cx="247" cy="311" r="16" stroke-width=".8"/><path d="M240 301h14v11q0 5-7 8.500q-7-3.500-7-8.500z" fill="#3f6fd8" fill-opacity=".5" stroke-width=".8"/><path d="M247 303.500v13M243.500 304.500v8q2 1 3.500 4q1.500-3 3.500-4v-8" stroke="#e8eefc" stroke-width=".8"/></g><path d="M244 314q14-6 22-12q10-8 14-16q-8 10-14 22q4-8 14-10q12-2 14 4q0 6-14 8" stroke="#5a58c0" stroke-width=".7" fill="none" opacity=".85"/></svg>
<div class="x" style="left:220.30px;top:215.30px;font-size:8.3px;line-height:11px;color:#1d3344;letter-spacing:0.668px;font-weight:bold;text-shadow:0 0 .5px #1d3344;">СЕРТИФІКАТ №</div>
<div class="x" style="left:295.00px;top:215.30px;font-size:7.8px;line-height:10px;color:#3f52c4;letter-spacing:0.124px;text-shadow:0 0 0.4px #3f52c4;font-family:'Liberation Serif',serif;font-style:italic;transform:skewX(-14deg);">11/1408-24</div>
<div class="x" style="left:210.75px;top:225.80px;font-size:8.6px;line-height:11px;color:#1d3344;letter-spacing:0.339px;font-weight:bold;">про проходження тренінгу</div>
<div class="x" style="left:193.75px;top:237.50px;font-size:5.2px;line-height:7px;color:#1d3344;letter-spacing:0.422px;font-weight:bold;">для викладачів і співробітників «Teaching success»</div>
<div class="x" style="left:261.50px;top:251.50px;font-size:3.8px;line-height:5px;color:#667;letter-spacing:-0.222px;">Виданий</div>
<div class="x" style="left:168.00px;top:258.30px;font-size:11.2px;line-height:15px;color:#14293a;letter-spacing:0.727px;font-weight:bold;text-shadow:0 0 .6px #14293a;">Чернишенко Ганні Олександрівні</div>
<div class="x" style="left:221.00px;top:274.30px;font-size:6.3px;line-height:8px;color:#2a3c50;letter-spacing:0.222px;">з 27.03.2024 р. по 05.06.2024 р.</div>
<div class="x" style="left:220.00px;top:286.30px;font-size:4.4px;line-height:6px;color:#1d3344;letter-spacing:0.387px;font-weight:bold;">у кількості 150 годин (5 кредитів ЄКТС)</div>
<div class="x" style="left:194.00px;top:303.00px;font-size:3.9px;line-height:5px;color:#1d3344;letter-spacing:0.485px;font-weight:bold;">Перший проректор</div>
<div class="x" style="left:312.00px;top:305.00px;font-size:3.9px;line-height:5px;color:#1d3344;letter-spacing:0.460px;font-weight:bold;">Дмитро МАРЧЕНКО</div>
<div class="x" style="left:257.75px;top:317.50px;font-size:4.2px;line-height:5px;color:#1d3344;letter-spacing:0.452px;font-weight:bold;">Київ - 2024</div>
</div>
<div class="a" style="left:133px;top:341.300px;width:274.200px;height:49.500px;background:#4a78cf"></div>
<div class="x" style="left:186.00px;top:356.40px;font-size:14.8px;line-height:19px;color:#2a3d66;letter-spacing:-0.162px;transform:scaleX(0.9);transform-origin:0 50%;">ВРУЧЕННЯ СЕРТИФІКАТІВ</div>
</div></div></div>
<div class="a" style="left:753.5px;top:16.300px;width:115px;height:63.300px;background:#fff;overflow:hidden">
<div class="a" style="left:0;top:0;width:436px;height:246px;transform:scale(0.2638);transform-origin:0 0"><div class="a" style="left:-55px;top:-165px">
<div class="a" style="left:153.500px;top:168px;width:233.500px;height:169px;background:#f5f6f9"></div>
<svg class="a" style="left:55px;top:165px" width="436" height="246" viewBox="55 165 436 246"><path d="M65.600 366Q77 371 78 382.300Q80 372 88.400 365.100Q93 377 87.800 390Q98 380 111.800 376.800Q107 395 89 398.600Q95 406 102 410.500L102 412L90 412Q76 400 70 388Q65 378 65.600 366Z" fill="#e9e0c4"/><path d="M437.900 328.800Q430 342 428 354Q429 360 436 364Q444 368 452 365Q458 361 461 352Q464 344 464.100 338.200L443.700 351.900Q443 340 437.900 328.800Z" fill="#f8e9bf"/><circle cx="461" cy="383.200" r="6.200" fill="#ffe596"/></svg>
<div class="a" style="left:0;top:0;width:0;height:0;transform:rotate(.85deg);transform-origin:271.500px 252px">
<div class="a" style="left:158.900px;top:175.450px;width:225.200px;height:153.100px;border:1.200px solid #3b7cc0;box-shadow:inset 0 0 0 1px #ecd93c;background:#f9fafc"></div>
<svg class="a" style="left:55px;top:165px;overflow:visible" width="436" height="246" viewBox="55 165 436 246"><g transform="translate(159.500 176)"><g fill="#f2c53a"><ellipse cx="22" cy="7.500" rx="3.400" ry="1.250" transform="rotate(-6 22 7.500)"/><ellipse cx="24.500" cy="11" rx="3.600" ry="1.300" transform="rotate(27 24.500 11)"/><ellipse cx="21" cy="11.800" rx="3.200" ry="1.200" transform="rotate(36 21 11.800)"/><circle cx="15.500" cy="9.500" r="1.200"/><circle cx="13" cy="11.300" r=".9"/><circle cx="10.300" cy="14.500" r="1.250"/><ellipse cx="7" cy="21" rx="1.300" ry="3.500" transform="rotate(14 7 21)"/><ellipse cx="11.500" cy="20.500" rx="1.300" ry="3.600" transform="rotate(-26 11.500 20.500)"/><ellipse cx="10.500" cy="25" rx="1.200" ry="3.200" transform="rotate(-20 10.500 25)"/><path d="M8.500 18Q11.500 11.500 20 9" stroke="#f2c53a" stroke-width=".8" fill="none"/></g></g><g transform="translate(383.500 176) scale(-1 1)"><g fill="#f2c53a"><ellipse cx="22" cy="7.500" rx="3.400" ry="1.250" transform="rotate(-6 22 7.500)"/><ellipse cx="24.500" cy="11" rx="3.600" ry="1.300" transform="rotate(27 24.500 11)"/><ellipse cx="21" cy="11.800" rx="3.200" ry="1.200" transform="rotate(36 21 11.800)"/><circle cx="15.500" cy="9.500" r="1.200"/><circle cx="13" cy="11.300" r=".9"/><circle cx="10.300" cy="14.500" r="1.250"/><ellipse cx="7" cy="21" rx="1.300" ry="3.500" transform="rotate(14 7 21)"/><ellipse cx="11.500" cy="20.500" rx="1.300" ry="3.600" transform="rotate(-26 11.500 20.500)"/><ellipse cx="10.500" cy="25" rx="1.200" ry="3.200" transform="rotate(-20 10.500 25)"/><path d="M8.500 18Q11.500 11.500 20 9" stroke="#f2c53a" stroke-width=".8" fill="none"/></g></g><g transform="translate(159.500 328) scale(1 -1)"><g fill="#f2c53a"><ellipse cx="22" cy="7.500" rx="3.400" ry="1.250" transform="rotate(-6 22 7.500)"/><ellipse cx="24.500" cy="11" rx="3.600" ry="1.300" transform="rotate(27 24.500 11)"/><ellipse cx="21" cy="11.800" rx="3.200" ry="1.200" transform="rotate(36 21 11.800)"/><circle cx="15.500" cy="9.500" r="1.200"/><circle cx="13" cy="11.300" r=".9"/><circle cx="10.300" cy="14.500" r="1.250"/><ellipse cx="7" cy="21" rx="1.300" ry="3.500" transform="rotate(14 7 21)"/><ellipse cx="11.500" cy="20.500" rx="1.300" ry="3.600" transform="rotate(-26 11.500 20.500)"/><ellipse cx="10.500" cy="25" rx="1.200" ry="3.200" transform="rotate(-20 10.500 25)"/><path d="M8.500 18Q11.500 11.500 20 9" stroke="#f2c53a" stroke-width=".8" fill="none"/></g></g><g transform="translate(383.500 328) scale(-1 -1)"><g fill="#f2c53a"><ellipse cx="22" cy="7.500" rx="3.400" ry="1.250" transform="rotate(-6 22 7.500)"/><ellipse cx="24.500" cy="11" rx="3.600" ry="1.300" transform="rotate(27 24.500 11)"/><ellipse cx="21" cy="11.800" rx="3.200" ry="1.200" transform="rotate(36 21 11.800)"/><circle cx="15.500" cy="9.500" r="1.200"/><circle cx="13" cy="11.300" r=".9"/><circle cx="10.300" cy="14.500" r="1.250"/><ellipse cx="7" cy="21" rx="1.300" ry="3.500" transform="rotate(14 7 21)"/><ellipse cx="11.500" cy="20.500" rx="1.300" ry="3.600" transform="rotate(-26 11.500 20.500)"/><ellipse cx="10.500" cy="25" rx="1.200" ry="3.200" transform="rotate(-20 10.500 25)"/><path d="M8.500 18Q11.500 11.500 20 9" stroke="#f2c53a" stroke-width=".8" fill="none"/></g></g><g filter="url(#b05)"><path d="M256.500 188.500h11l1 2v1.500h-13v-1.500z" fill="#3a5068"/><path d="M256 193h12v7.500q0 5.500-6 7.500q-6-2-6-7.500z" fill="none" stroke="#3a5068" stroke-width="1.300"/><path d="M258.500 193.500v6.800q0 3.600 3.500 4.800q3.500-1.200 3.500-4.800v-6.800" fill="none" stroke="#3a5068" stroke-width="1"/><text x="262" y="202" font-size="8" font-weight="bold" text-anchor="middle" fill="#c9a227" font-family="Liberation Sans, sans-serif">Е</text><circle cx="284" cy="198" r="8.200" fill="#fbe9dc" stroke="#e8742a" stroke-width="1.800"/><path d="M284 192v11M280.500 195q0 6 3.500 7.500q3.500-1.500 3.500-7.500M278.800 197q.8 4.500 3.700 6M289.200 197q-.8 4.500-3.700 6" stroke="#e8742a" stroke-width=".9" fill="none"/></g><path d="M294 224.500h42" stroke="#8a96c8" stroke-width=".5"/><g fill="none" stroke="#3f6fd8" opacity=".82" filter="url(#b05)"><circle cx="247" cy="311" r="26" stroke-width="1.300"/><circle cx="247" cy="311" r="24" stroke-width=".6"/><circle cx="247" cy="311" r="20" stroke-width="3.400" stroke-dasharray="1.300 .9" opacity=".75"/><circle cx="247" cy="311" r="16" stroke-width=".8"/><path d="M240 301h14v11q0 5-7 8.500q-7-3.500-7-8.500z" fill="#3f6fd8" fill-opacity=".5" stroke-width=".8"/><path d="M247 303.500v13M243.500 304.500v8q2 1 3.500 4q1.500-3 3.500-4v-8" stroke="#e8eefc" stroke-width=".8"/></g><path d="M244 314q14-6 22-12q10-8 14-16q-8 10-14 22q4-8 14-10q12-2 14 4q0 6-14 8" stroke="#5a58c0" stroke-width=".7" fill="none" opacity=".85"/></svg>
<div class="x" style="left:220.30px;top:215.30px;font-size:8.3px;line-height:11px;color:#1d3344;letter-spacing:0.668px;font-weight:bold;text-shadow:0 0 .5px #1d3344;">СЕРТИФІКАТ №</div>
<div class="x" style="left:295.00px;top:215.30px;font-size:7.8px;line-height:10px;color:#3f52c4;letter-spacing:0.124px;text-shadow:0 0 0.4px #3f52c4;font-family:'Liberation Serif',serif;font-style:italic;transform:skewX(-14deg);">11/1408-24</div>
<div class="x" style="left:210.75px;top:225.80px;font-size:8.6px;line-height:11px;color:#1d3344;letter-spacing:0.339px;font-weight:bold;">про проходження тренінгу</div>
<div class="x" style="left:193.75px;top:237.50px;font-size:5.2px;line-height:7px;color:#1d3344;letter-spacing:0.422px;font-weight:bold;">для викладачів і співробітників «Teaching success»</div>
<div class="x" style="left:261.50px;top:251.50px;font-size:3.8px;line-height:5px;color:#667;letter-spacing:-0.222px;">Виданий</div>
<div class="x" style="left:183.00px;top:258.30px;font-size:11.2px;line-height:15px;color:#14293a;letter-spacing:0.530px;font-weight:bold;text-shadow:0 0 .6px #14293a;">Юркевичу Юрію Вадимовичу</div>
<div class="x" style="left:221.00px;top:274.30px;font-size:6.3px;line-height:8px;color:#2a3c50;letter-spacing:0.222px;">з 27.03.2024 р. по 05.06.2024 р.</div>
<div class="x" style="left:220.00px;top:286.30px;font-size:4.4px;line-height:6px;color:#1d3344;letter-spacing:0.387px;font-weight:bold;">у кількості 150 годин (5 кредитів ЄКТС)</div>
<div class="x" style="left:194.00px;top:303.00px;font-size:3.9px;line-height:5px;color:#1d3344;letter-spacing:0.485px;font-weight:bold;">Перший проректор</div>
<div class="x" style="left:312.00px;top:305.00px;font-size:3.9px;line-height:5px;color:#1d3344;letter-spacing:0.460px;font-weight:bold;">Дмитро МАРЧЕНКО</div>
<div class="x" style="left:257.75px;top:317.50px;font-size:4.2px;line-height:5px;color:#1d3344;letter-spacing:0.452px;font-weight:bold;">Київ - 2024</div>
</div>
<div class="a" style="left:133px;top:341.300px;width:274.200px;height:49.500px;background:#4a78cf"></div>
<div class="x" style="left:186.00px;top:356.40px;font-size:14.8px;line-height:19px;color:#2a3d66;letter-spacing:-0.162px;transform:scaleX(0.9);transform-origin:0 50%;">ВРУЧЕННЯ СЕРТИФІКАТІВ</div>
</div></div></div>
<div class="x" style="left:102.50px;top:81.50px;font-size:9.8px;line-height:13px;color:#c4c4c4;letter-spacing:0.000px;">28</div>
<div class="x" style="left:233.00px;top:81.50px;font-size:9.8px;line-height:13px;color:#c4c4c4;letter-spacing:0.000px;">29</div>
<div class="x" style="left:363.50px;top:81.50px;font-size:9.8px;line-height:13px;color:#c4c4c4;letter-spacing:0.000px;">30</div>
<div class="x" style="left:625.00px;top:81.50px;font-size:9.8px;line-height:13px;color:#c4c4c4;letter-spacing:0.000px;">32</div>
<div class="x" style="left:756.00px;top:81.50px;font-size:9.8px;line-height:13px;color:#c4c4c4;letter-spacing:0.000px;">33</div>
<div class="x" style="left:493.50px;top:81.50px;font-size:9.8px;line-height:13px;color:#cf6425;letter-spacing:0.000px;">31</div>
<svg class="a" style="left:504.5px;top:22px;filter:drop-shadow(1px 1.500px 1px rgba(120,0,40,.45))" width="22" height="20" viewBox="0 0 24 22"><path d="M12 20.500C4.500 15.500 1 11.500 1 7.200A5.700 5.700 0 0 1 11 3.600l1 1.300 1-1.300A5.700 5.700 0 0 1 23 7.200c0 4.300-3.500 8.300-11 13.300z" fill="url(#heart)" transform="rotate(-8 12 11)"/></svg>
<div class="a" style="left:677px;top:57px;width:40px;height:18px;background:#fff;border:1px solid #c8c8c8;box-shadow:1px 1px 1px rgba(0,0,0,.25)"></div>
<div class="x" style="left:682.50px;top:60.50px;font-size:8.5px;line-height:11px;color:#4a4a4a;letter-spacing:-0.317px;">Slide 32</div>
<div class="a" style="left:601.5px;top:101px;width:140px;height:4px;border-radius:2px;background:#585858"></div>
</div>
<div class="a" style="left:808px;top:66px;width:3.500px;height:482px;background:#1c1c1c"></div>
<div class="a" style="left:811px;top:66px;width:1px;height:482px;background:#373737"></div>
<div class="x" style="left:825.00px;top:80.10px;font-size:11.8px;line-height:15px;color:#fff;letter-spacing:-0.079px;font-weight:bold;transform:scaleX(0.9);transform-origin:0 50%;">Участники</div>
<svg class="a" style="left:973px;top:84px" width="12" height="5" viewBox="0 0 12 5"><circle cx="2" cy="2.500" r=".8" fill="#d0d0d0"/><circle cx="6" cy="2.500" r=".8" fill="#d0d0d0"/><circle cx="10" cy="2.500" r=".8" fill="#d0d0d0"/></svg>
<svg class="a" style="left:995px;top:82px" width="11" height="11" viewBox="0 0 11 11" stroke="#dcdcdc" stroke-width="1" stroke-linecap="round"><path d="M1.500 1.500l8 8M9.500 1.500l-8 8"/></svg>
<div class="a" style="left:812px;top:106px;width:212px;height:1px;background:#3a3a3a"></div>
<div class="a" style="left:824.500px;top:117.500px;width:186.500px;height:21.500px;background:#2f2f2f;border-radius:3px"></div>
<div class="x" style="left:833.50px;top:122.30px;font-size:10.2px;line-height:13px;color:#8c8c8c;letter-spacing:-0.050px;transform:scaleX(0.9);transform-origin:0 50%;">Введите имя</div>
<svg class="a" style="left:992px;top:122px" width="12" height="12" viewBox="0 0 12 12" fill="none" stroke="#c4c4c4" stroke-width="1.100" stroke-linecap="round"><circle cx="4.800" cy="4.800" r="3.300"/><path d="M7.300 7.300l3.200 3.200"/></svg>
<div class="a" style="left:824.500px;top:145.500px;width:186.500px;height:21.500px;background:#242424;border:1px solid #4f4f4f;border-radius:3px"></div>
<svg class="a" style="left:858px;top:150.500px" width="12" height="12" viewBox="0 0 12 12" fill="none" stroke="#e0e0e0" stroke-width="1" stroke-linecap="round" stroke-linejoin="round"><path d="M4.500 2.500h-1.500a1.500 1.500 0 0 0-1.500 1.500v5a1.500 1.500 0 0 0 1.500 1.500h5a1.500 1.500 0 0 0 1.500-1.500v-.8"/><path d="M7.300 1.300l3.200 2.800-3.200 2.800v-1.700q-2.300 0-3.500 1.800q.2-4 3.500-4.200z"/></svg>
<div class="x" style="left:874.60px;top:149.60px;font-size:10.6px;line-height:14px;color:#fff;letter-spacing:0.021px;transform:scaleX(0.9);transform-origin:0 50%;text-shadow:0 0 0.45px #fff;">Отправка приглашения</div>
<svg class="a" style="left:815px;top:181px" width="6" height="5" viewBox="0 0 6 5"><path d="M.3.800h5.400L3 4.300z" fill="#c8c8c8"/></svg>
<div class="x" style="left:825.00px;top:177.60px;font-size:9.3px;line-height:12px;color:#e8e8e8;letter-spacing:-0.267px;transform:scaleX(0.9);transform-origin:0 50%;">В этом собрании (11)</div>
<svg class="a" style="left:824px;top:202px;" width="23" height="23" viewBox="824 202 23 23" preserveAspectRatio="none"><defs><clipPath id="cp0"><circle cx="835.500" cy="213" r="10.750"/></clipPath></defs><g clip-path="url(#cp0)"><rect x="824" y="202" width="23" height="23" fill="#f4f1ee"/><g filter="url(#b05)"><path d="M828.500 214q-1-10 7.500-10.500q8 .5 7.500 9.500q0 5-2 7h-11q-2-3-2-6z" fill="#5e1c22"/><ellipse cx="835.800" cy="212.300" rx="4.300" ry="5.200" fill="#e6bea8"/><path d="M831 210q2-4 8-3q-4 1-6 5z" fill="#6a2026"/><path d="M826 225q1-6 6-6.500l3.500 3 3.500-3q5 .5 6 6.500z" fill="#2e2228"/><path d="M833 218.500h5l-2.500 3.500z" fill="#e8c8b8"/><path d="M833.800 214.800q2 1 4 0" stroke="#b04a50" stroke-width=".7" fill="none"/></g></g></svg>
<div class="x" style="left:852.00px;top:202.00px;font-size:10.3px;line-height:13px;color:#fff;letter-spacing:-0.063px;transform:scaleX(0.9);transform-origin:0 50%;">Мартинець Лілія Асхатівна</div>
<div class="x" style="left:852.00px;top:214.00px;font-size:9px;line-height:12px;color:#a0a0a0;letter-spacing:0.009px;transform:scaleX(0.9);transform-origin:0 50%;">Инициатор</div>
<svg class="a" style="left:998px;top:206px" width="13" height="14" viewBox="0 0 13 14" fill="none" stroke="#e6e6e6" stroke-width="1" stroke-linecap="round"><rect x="4.700" y="1" width="3.600" height="7" rx="1.800" fill="#e6e6e6" stroke="none"/><path d="M3 6.800a3.500 3.500 0 0 0 7 0M6.500 10.500v2.300"/></svg>
<div class="a" style="left:824.75px;top:234.25px;width:21.500px;height:21.500px;border-radius:50%;background:#f3d6d8"></div>
<div class="x" style="left:829.57px;top:239.80px;font-size:8.4px;line-height:11px;color:#8b2b3a;letter-spacing:0.000px;text-shadow:0 0 0.3px #8b2b3a;">ВО</div>
<div class="x" style="left:852.00px;top:239.00px;font-size:10.3px;line-height:13px;color:#fff;letter-spacing:-0.100px;transform:scaleX(0.9);transform-origin:0 50%;">Волох Вадим Олександрович</div>
<svg class="a" style="left:998px;top:238px" width="13" height="14" viewBox="0 0 13 14" fill="none" stroke="#d2d2d2" stroke-width=".95" stroke-linecap="round"><rect x="4.800" y="1.200" width="3.400" height="6.300" rx="1.700"/><path d="M3 6.500a3.500 3.500 0 0 0 7 0M6.500 10v2.200M1.500 1.200l10 11.600"/></svg>
<svg class="a" style="left:824px;top:266px;" width="23" height="23" viewBox="824 266 23 23" preserveAspectRatio="none"><defs><clipPath id="cp2"><circle cx="835.500" cy="277" r="10.750"/></clipPath></defs><g clip-path="url(#cp2)"><rect x="824" y="266" width="23" height="23" fill="#ececec"/><g filter="url(#b05)"><circle cx="835.500" cy="277" r="9.600" fill="none" stroke="#161616" stroke-width="2.600"/><circle cx="835.500" cy="277" r="9.600" fill="none" stroke="#e8e8e8" stroke-width=".8" stroke-dasharray=".8 1.300"/><path d="M832 277q-.5-6 3.500-6t3.500 6l.5 3h-8z" fill="#c4602c"/><ellipse cx="835.500" cy="275.300" rx="2.100" ry="2.600" fill="#ecc8b0"/><path d="M831.300 286.500q0-6.500 4.200-6.500t4.200 6.500z" fill="#fcfcfc"/></g></g></svg>
<div class="x" style="left:852.00px;top:271.00px;font-size:10.3px;line-height:13px;color:#fff;letter-spacing:-0.002px;transform:scaleX(0.9);transform-origin:0 50%;">Гробовод Вікторія Олександрів...</div>
<svg class="a" style="left:998px;top:270px" width="13" height="14" viewBox="0 0 13 14" fill="none" stroke="#d2d2d2" stroke-width=".95" stroke-linecap="round"><rect x="4.800" y="1.200" width="3.400" height="6.300" rx="1.700"/><path d="M3 6.500a3.500 3.500 0 0 0 7 0M6.500 10v2.200M1.500 1.200l10 11.600"/></svg>
<svg class="a" style="left:824px;top:298px;" width="23" height="23" viewBox="824 298 23 23" preserveAspectRatio="none"><defs><clipPath id="cp3"><circle cx="835.500" cy="309" r="10.750"/></clipPath></defs><g clip-path="url(#cp3)"><rect x="824" y="298" width="23" height="23" fill="#6e6e68"/><g filter="url(#b05)"><rect x="824" y="298" width="9" height="14" fill="#4a5540"/><rect x="840" y="298" width="8" height="14" fill="#8a8a86"/><path d="M830 307q-.5-7.500 6-7.500t6 7l-1 3h-10z" fill="#1a1818"/><ellipse cx="836" cy="308" rx="4.200" ry="5.200" fill="#c49c88"/><path d="M832 309.500q0 5.500 4 5.500t4-5.500q-2 1.500-4 1.500t-4-1.500z" fill="#332a26"/><path d="M825 321q1-6.500 7-7l4 3 4-3q6 .5 7 7z" fill="#26262a"/><path d="M833.300 314.500l2.700 6 2.700-6q-2.700 1.500-5.400 0z" fill="#e8e8e8"/></g></g></svg>
<div class="x" style="left:852.00px;top:303.00px;font-size:10.3px;line-height:13px;color:#fff;letter-spacing:0.130px;transform:scaleX(0.9);transform-origin:0 50%;">Карпіцький Миколай Миколай...</div>
<svg class="a" style="left:998px;top:302px" width="13" height="14" viewBox="0 0 13 14" fill="none" stroke="#d2d2d2" stroke-width=".95" stroke-linecap="round"><rect x="4.800" y="1.200" width="3.400" height="6.300" rx="1.700"/><path d="M3 6.500a3.500 3.500 0 0 0 7 0M6.500 10v2.200M1.500 1.200l10 11.600"/></svg>
<div class="a" style="left:824.75px;top:330.25px;width:21.500px;height:21.500px;border-radius:50%;background:#fbe3ca"></div>
<div class="x" style="left:828.86px;top:335.80px;font-size:8.4px;line-height:11px;color:#9a5a1c;letter-spacing:0.000px;text-shadow:0 0 0.3px #9a5a1c;">МФ</div>
<div class="x" style="left:852.00px;top:335.00px;font-size:10.3px;line-height:13px;color:#fff;letter-spacing:-0.046px;transform:scaleX(0.9);transform-origin:0 50%;">Могутова Валентина Федорівна</div>
<svg class="a" style="left:998px;top:334px" width="13" height="14" viewBox="0 0 13 14" fill="none" stroke="#d2d2d2" stroke-width=".95" stroke-linecap="round"><rect x="4.800" y="1.200" width="3.400" height="6.300" rx="1.700"/><path d="M3 6.500a3.500 3.500 0 0 0 7 0M6.500 10v2.200M1.500 1.200l10 11.600"/></svg>
<div class="a" style="left:824.75px;top:362.25px;width:21.500px;height:21.500px;border-radius:50%;background:#f3cfcb"></div>
<div class="x" style="left:829.67px;top:367.80px;font-size:8.4px;line-height:11px;color:#8e2d24;letter-spacing:0.000px;text-shadow:0 0 0.3px #8e2d24;">НВ</div>
<div class="x" style="left:852.00px;top:367.00px;font-size:10.3px;line-height:13px;color:#fff;letter-spacing:-0.013px;transform:scaleX(0.9);transform-origin:0 50%;">Нікітіна Віра Вікторівна</div>
<svg class="a" style="left:998px;top:366px" width="13" height="14" viewBox="0 0 13 14" fill="none" stroke="#d2d2d2" stroke-width=".95" stroke-linecap="round"><rect x="4.800" y="1.200" width="3.400" height="6.300" rx="1.700"/><path d="M3 6.500a3.500 3.500 0 0 0 7 0M6.500 10v2.200M1.500 1.200l10 11.600"/></svg>
<svg class="a" style="left:824px;top:394px;" width="23" height="23" viewBox="824 394 23 23" preserveAspectRatio="none"><defs><clipPath id="cp6"><circle cx="835.500" cy="405" r="10.750"/></clipPath></defs><g clip-path="url(#cp6)"><rect x="824" y="394" width="23" height="23" fill="#7d6d42"/><g filter="url(#b05)"><rect x="824" y="394" width="23" height="6" fill="#a89c6c"/><path d="M825.500 398l11-2.300v1.800l-11 3.200z" fill="#f6f6ea"/><rect x="842" y="396" width="6" height="12" fill="#b8ad90"/><rect x="824" y="401" width="4" height="16" fill="#3a3018"/><path d="M829 405q0-6.500 6.500-7q6.500 0 7 6.500q.5 4.500-2 7.500h-10q-2-3-1.500-7z" fill="#4a261e"/><ellipse cx="834.500" cy="405" rx="3" ry="3.700" fill="#c08e7c"/><path d="M824 417q1.500-7.500 10-7q6.500.5 12-1.500v8.500z" fill="#98aec4"/><path d="M827 413.500q6.500-3.500 16-2.300" stroke="#d6e0ea" stroke-width="1.400" fill="none"/></g></g></svg>
<div class="x" style="left:852.00px;top:399.00px;font-size:10.3px;line-height:13px;color:#fff;letter-spacing:-0.087px;transform:scaleX(0.9);transform-origin:0 50%;">Стрижак Тетяна Анатоліївна</div>
<svg class="a" style="left:998px;top:398px" width="13" height="14" viewBox="0 0 13 14" fill="none" stroke="#d2d2d2" stroke-width=".95" stroke-linecap="round"><rect x="4.800" y="1.200" width="3.400" height="6.300" rx="1.700"/><path d="M3 6.500a3.500 3.500 0 0 0 7 0M6.500 10v2.200M1.500 1.200l10 11.600"/></svg>
<div class="a" style="left:824.75px;top:426.25px;width:21.500px;height:21.500px;border-radius:50%;background:#c3d1ea"></div>
<div class="x" style="left:829.64px;top:431.80px;font-size:8.4px;line-height:11px;color:#2b4a92;letter-spacing:0.000px;text-shadow:0 0 0.3px #2b4a92;">ХФ</div>
<div class="x" style="left:852.00px;top:431.00px;font-size:10.3px;line-height:13px;color:#fff;letter-spacing:-0.011px;transform:scaleX(0.9);transform-origin:0 50%;">Халін Сергій Федосійович</div>
<svg class="a" style="left:998px;top:430px" width="13" height="14" viewBox="0 0 13 14" fill="none" stroke="#d2d2d2" stroke-width=".95" stroke-linecap="round"><rect x="4.800" y="1.200" width="3.400" height="6.300" rx="1.700"/><path d="M3 6.500a3.500 3.500 0 0 0 7 0M6.500 10v2.200M1.500 1.200l10 11.600"/></svg>
<div class="a" style="left:824.75px;top:458.25px;width:21.500px;height:21.500px;border-radius:50%;background:#e9dad5"></div>
<div class="x" style="left:829.20px;top:463.80px;font-size:8.4px;line-height:11px;color:#6b473d;letter-spacing:0.000px;text-shadow:0 0 0.3px #6b473d;">ЧМ</div>
<div class="x" style="left:852.00px;top:463.00px;font-size:10.3px;line-height:13px;color:#fff;letter-spacing:0.088px;transform:scaleX(0.9);transform-origin:0 50%;">Чаплигін Євген Миколайович</div>
<svg class="a" style="left:998px;top:462px" width="13" height="14" viewBox="0 0 13 14" fill="none" stroke="#d2d2d2" stroke-width=".95" stroke-linecap="round"><rect x="4.800" y="1.200" width="3.400" height="6.300" rx="1.700"/><path d="M3 6.500a3.500 3.500 0 0 0 7 0M6.500 10v2.200M1.500 1.200l10 11.600"/></svg>
<div class="a" style="left:824.75px;top:490.25px;width:21.500px;height:21.500px;border-radius:50%;background:#c3d1ea"></div>
<div class="x" style="left:829.43px;top:495.80px;font-size:8.4px;line-height:11px;color:#2b4a92;letter-spacing:0.000px;text-shadow:0 0 0.3px #2b4a92;">ЧО</div>
<div class="x" style="left:852.00px;top:495.00px;font-size:10.3px;line-height:13px;color:#fff;letter-spacing:-0.004px;transform:scaleX(0.9);transform-origin:0 50%;">Чернишенко Ганна Олександрі...</div>
<svg class="a" style="left:998px;top:494px" width="13" height="14" viewBox="0 0 13 14" fill="none" stroke="#d2d2d2" stroke-width=".95" stroke-linecap="round"><rect x="4.800" y="1.200" width="3.400" height="6.300" rx="1.700"/><path d="M3 6.500a3.500 3.500 0 0 0 7 0M6.500 10v2.200M1.500 1.200l10 11.600"/></svg>
<div class="a" style="left:824.75px;top:522.25px;width:21.500px;height:21.500px;border-radius:50%;background:#c8e6d3"></div>
<div class="x" style="left:828.46px;top:527.80px;font-size:8.4px;line-height:11px;color:#2a7048;letter-spacing:0.000px;text-shadow:0 0 0.3px #2a7048;">ЮВ</div>
<div class="x" style="left:852.00px;top:527.00px;font-size:10.3px;line-height:13px;color:#fff;letter-spacing:0.103px;transform:scaleX(0.9);transform-origin:0 50%;">Юркевич Юрій Вадимович</div>
<svg class="a" style="left:998px;top:526px" width="13" height="14" viewBox="0 0 13 14" fill="none" stroke="#d2d2d2" stroke-width=".95" stroke-linecap="round"><rect x="4.800" y="1.200" width="3.400" height="6.300" rx="1.700"/><path d="M3 6.500a3.500 3.500 0 0 0 7 0M6.500 10v2.200M1.500 1.200l10 11.600"/></svg>
<div id="taskbar">
<svg class="a" style="left:10.5px;top:9px" width="11" height="11" viewBox="0 0 11 11" ><path d="M0 0h5v5H0zM6 0h5v5H6zM0 6h5v5H0zM6 6h5v5H6z" fill="#fff"/></svg>
<div class="a" style="left:32px;top:.5px;width:192px;height:27.500px;background:#f2f2f2"></div>
<svg class="a" style="left:39.5px;top:8.5px" width="12" height="12" viewBox="0 0 12 12" fill="none" stroke="#222" stroke-width="1.100" stroke-linecap="round"><circle cx="7.200" cy="4.800" r="3.400"/><path d="M4.800 7.300L1.300 10.800"/></svg>
<div class="x" style="left:59.00px;top:7.50px;font-size:10.5px;line-height:14px;color:#3a3a3a;letter-spacing:0.101px;">Поиск</div>
<svg class="a" style="left:172px;top:0.5px" width="52" height="27" viewBox="0 0 52 27" ><path d="M0 27l9-8h43v8z" fill="#e0b47c"/><path d="M0 27l3-2.500h49v2.500z" fill="#c89858"/><g transform="translate(1 2) rotate(-14 16 14) scale(.9)"><rect x="8" y="8" width="16" height="12" rx="1" fill="#5aa84a"/><rect x="9.500" y="9" width="6" height="10" fill="#f4f4ee"/><rect x="16.500" y="9" width="6" height="10" fill="#f4f4ee"/><path d="M10.500 12h4M10.500 14.500h4M17.500 12h4M17.500 14.500h4" stroke="#9aa" stroke-width=".6"/></g><path d="M18 14l9-9 2 2-9 9-3 1z" fill="#f0b030"/><path d="M27 5l1.500-1.500 2 2L29 7z" fill="#e05050"/><path d="M33 10q0-6 7-6t7 6v10q0 3-3 3h-8q-3 0-3-3z" fill="#2f7fe0"/><path d="M36 4.500q0-3 4-3t4 3" stroke="#1c5cb0" stroke-width="1.200" fill="none"/><rect x="35.500" y="14" width="9" height="6.500" rx="1.500" fill="#7ab4f4"/><rect x="33" y="20.500" width="14" height="2.500" rx="1" fill="#1c4a98"/></svg>
<svg class="a" style="left:233px;top:8px" width="14" height="13" viewBox="0 0 14 13" fill="none" stroke="#fff" stroke-width="1"><rect x="4" y="4" width="6" height="5.500"/><path d="M2 1.500v10.500M12 1.500v10.500M2 4h2M2 9.500h2M10 4h3.500M10 9.500h3.500"/></svg>
<svg class="a" style="left:265px;top:6.5px" width="16" height="16" viewBox="0 0 16 16" ><defs><linearGradient id="ge" x1="0" y1="0" x2="1" y2="1"><stop offset="0" stop-color="#35c1f1"/><stop offset=".5" stop-color="#1b84d6"/><stop offset="1" stop-color="#0c59a4"/></linearGradient></defs><circle cx="8" cy="8" r="7.500" fill="url(#ge)"/><path d="M1 9q0-7 7-8q6 0 7.300 5q-2-2.500-6-2q-5 .8-5.300 6q0 3 3 5q-5-.5-6-6z" fill="#4fd86a" opacity=".9"/><path d="M6 9.500q1.500-2.500 5-1.500q1.500 1 .5 2.800q3-.3 3.800-3q.7 4-3.300 6.500q-4 1.500-6-1.500q-.8-1.500 0-3.300z" fill="#0e4f9a"/><rect x="2" y="9.500" width="6.500" height="5" rx=".8" fill="#c8771c"/><rect x="4" y="8.500" width="2.500" height="1.500" fill="#8a4a10"/></svg>
<svg class="a" style="left:299px;top:6.5px" width="16" height="16" viewBox="0 0 16 16" ><circle cx="8" cy="8" r="7.300" fill="#0f9ee6"/><circle cx="4.500" cy="4.500" r="3.300" fill="#0f9ee6"/><circle cx="11.500" cy="11.500" r="3.300" fill="#0f9ee6"/><text x="8" y="11.800" font-size="10.500" font-family="Liberation Sans, sans-serif" font-weight="bold" text-anchor="middle" fill="#fff">S</text></svg>
<svg class="a" style="left:332px;top:6px" width="16" height="17" viewBox="0 0 16 17" ><path d="M5 4.500q0-3 3-3t3 3" stroke="#e8e8e8" stroke-width="1" fill="none"/><rect x="1" y="4" width="14" height="12" rx="1.500" fill="#f4f4f4"/><rect x="4.300" y="6.800" width="3.200" height="3.200" fill="#f25022"/><rect x="8.500" y="6.800" width="3.200" height="3.200" fill="#7fba00"/><rect x="4.300" y="11" width="3.200" height="3.200" fill="#00a4ef"/><rect x="8.500" y="11" width="3.200" height="3.200" fill="#ffb900"/></svg>
<svg class="a" style="left:364.5px;top:7.5px" width="17" height="14" viewBox="0 0 17 14" ><path d="M.5 5L8.500.5l8 4.500v8.500H.5z" fill="#1565c0"/><path d="M.5 5.500l8 5 8-5V13.500H.5z" fill="#3aa0f0"/><path d="M.5 13.500l6.500-5 1.500 1 1.500-1 6.500 5z" fill="#5cb8ff"/><path d="M2.500 3.800h12v3l-6 3.700-6-3.700z" fill="#e8f2fc"/></svg>
<svg class="a" style="left:398px;top:7.5px" width="16" height="14" viewBox="0 0 16 14" ><path d="M.5 2q0-1 1-1h4l1.500 1.500h7.500q1 0 1 1V12q0 1-1 1H1.500q-1 0-1-1z" fill="#e8a81c"/><path d="M.5 4.500h15V12q0 1-1 1H1.500q-1 0-1-1z" fill="#fcd354"/><rect x="4" y="8.500" width="8" height="4.500" fill="#3a8ee0"/><rect x="5.500" y="10" width="5" height="1" fill="#e8f2fc"/></svg>
<svg class="a" style="left:431px;top:6.5px" width="16" height="16" viewBox="0 0 16 16" ><circle cx="8" cy="8" r="7.500" fill="#e33b2e"/><path d="M8 8L1.500 4.250A7.500 7.500 0 0 0 8 15.500l3.500-6z" fill="#2da94f"/><path d="M8 8l3.500 1.500L8 15.500A7.500 7.500 0 0 0 14.500 4.250H8z" fill="#fbc116"/><circle cx="8" cy="8" r="3.500" fill="#fff"/><circle cx="8" cy="8" r="2.700" fill="#3b7ded"/></svg>
<div class="a" style="left:457px;top:.5px;width:30.500px;height:27.500px;background:#3c4959"></div>
<svg class="a" style="left:463px;top:6.5px" width="19" height="17" viewBox="0 0 19 17" ><circle cx="11" cy="3.200" r="2.300" fill="#7b83eb"/><circle cx="15.300" cy="4" r="1.700" fill="#5059c9"/><rect x="8.500" y="6" width="8.500" height="8" rx="2" fill="#5059c9"/><rect x="1.500" y="4" width="9" height="9" rx="1.200" fill="#4b53bc"/><text x="6" y="11.300" font-size="7.500" font-family="Liberation Sans, sans-serif" font-weight="bold" text-anchor="middle" fill="#fff">T</text><circle cx="14" cy="12" r="4.300" fill="#c4314b" stroke="#3c4959" stroke-width=".6"/><text x="14" y="14.300" font-size="6.500" font-family="Liberation Sans, sans-serif" font-weight="bold" text-anchor="middle" fill="#fff">1</text></svg>
<svg class="a" style="left:497px;top:7px" width="17" height="15" viewBox="0 0 17 15" ><rect x="5" y=".5" width="11.500" height="14" rx="1" fill="#41a5ee"/><rect x="5" y="4" width="11.500" height="3.600" fill="#2b7cd3"/><rect x="5" y="7.600" width="11.500" height="3.500" fill="#185abd"/><rect x="5" y="11" width="11.500" height="3.500" rx="1" fill="#103f91"/><rect x=".5" y="3.500" width="9" height="8.500" rx="1" fill="#185abd"/><text x="5" y="10.300" font-size="7" font-family="Liberation Sans, sans-serif" font-weight="bold" text-anchor="middle" fill="#fff">W</text></svg>
<svg class="a" style="left:530px;top:7px" width="17" height="15" viewBox="0 0 17 15" ><rect x="5" y=".5" width="11.500" height="14" rx="1" fill="#21a366"/><rect x="5" y=".5" width="5.700" height="7" fill="#107c41"/><rect x="10.700" y="7.500" width="5.800" height="7" fill="#185c37"/><rect x="10.700" y=".5" width="5.800" height="7" fill="#33c481"/><rect x=".5" y="3.500" width="9" height="8.500" rx="1" fill="#107c41"/><text x="5" y="10.400" font-size="7.500" font-family="Liberation Sans, sans-serif" font-weight="bold" text-anchor="middle" fill="#fff">X</text></svg>
<svg class="a" style="left:563px;top:6.5px" width="17" height="16" viewBox="0 0 17 16" ><circle cx="10" cy="8" r="7" fill="#ed6c47"/><path d="M10 1a7 7 0 0 1 7 7h-7z" fill="#ff8f6b"/><path d="M3 8h14a7 7 0 0 1-14 0z" fill="#d35230"/><rect x=".5" y="3.700" width="9" height="8.600" rx="1" fill="#c43e1c"/><text x="5.200" y="10.600" font-size="7.500" font-family="Liberation Sans, sans-serif" font-weight="bold" text-anchor="middle" fill="#fff">P</text></svg>
<svg class="a" style="left:595px;top:5.5px" width="20" height="19" viewBox="0 0 20 19" ><path d="M8 1.500q6 0 6 5.500t-4 6l-2.500 3v-3Q2 12.500 2 7t6-5.500z" fill="#7d51c8" stroke="#e8e0f8" stroke-width="1.200"/><path d="M6 5q-.8 1 .5 3t3.300 3q1 .3 1.500-.8l-1.300-1-.8.500q-1.200-.6-1.800-2l.6-.7L7 5.200z" fill="#fff"/><rect x="8.800" y="7.800" width="10.500" height="9.200" rx="2" fill="#e8363a"/></svg>
<div class="x" style="left:605.10px;top:13.10px;font-size:7.4px;line-height:10px;color:#fff;letter-spacing:-0.230px;">56</div>
<svg class="a" style="left:629px;top:6.5px" width="16" height="16" viewBox="0 0 16 16" ><rect x=".5" y=".5" width="15" height="15" rx="2" fill="#b30b00"/><path d="M3 12q2-1 4-4.500t1.300-4.500q-.8-.8-1 .8q.2 2.500 2.700 5t3.300 1.500q-.2-1.200-3.300-.8T3.800 12q-1 1-.8 0z" stroke="#fff" stroke-width="1" fill="none"/></svg>
<div class="a" style="left:392.5px;top:25.500px;width:27px;height:2px;background:#76b9ed"></div>
<div class="a" style="left:425.5px;top:25.500px;width:27px;height:2px;background:#76b9ed"></div>
<div class="a" style="left:491.5px;top:25.500px;width:27px;height:2px;background:#76b9ed"></div>
<div class="a" style="left:524.5px;top:25.500px;width:27px;height:2px;background:#76b9ed"></div>
<div class="a" style="left:557.5px;top:25.500px;width:27px;height:2px;background:#76b9ed"></div>
<div class="a" style="left:590.5px;top:25.500px;width:27px;height:2px;background:#76b9ed"></div>
<div class="a" style="left:623.5px;top:25.500px;width:27px;height:2px;background:#76b9ed"></div>
<div class="a" style="left:457px;top:25.500px;width:30.500px;height:2px;background:#8ccaf6"></div>
<svg class="a" style="left:746px;top:6.5px" width="16" height="18" viewBox="0 0 16 18" ><ellipse cx="8" cy="3.500" rx="6" ry="2.500" fill="#f0a020"/><ellipse cx="6.500" cy="6.800" rx="6" ry="2.500" fill="#e88a18"/><ellipse cx="8.500" cy="10" rx="6" ry="2.500" fill="#f4a828"/><path d="M5 17l3-3.500 3 3.500-3-1.200z" fill="#8ad03a"/></svg>
<div class="x" style="left:768.00px;top:8.20px;font-size:10.2px;line-height:13px;color:#fff;letter-spacing:-0.500px;transform:scaleX(0.9);transform-origin:0 50%;">USD/JPY</div>
<div class="x" style="left:811.00px;top:8.20px;font-size:10.2px;line-height:13px;color:#2bd24a;letter-spacing:0.024px;transform:scaleX(0.9);transform-origin:0 50%;">+1.01%</div>
<svg class="a" style="left:857px;top:10.5px" width="11" height="8" viewBox="0 0 11 8" fill="none" stroke="#fff" stroke-width="1.100"><path d="M1.500 6l4-4 4 4"/></svg>
<svg class="a" style="left:874px;top:7px" width="9" height="15" viewBox="0 0 9 15" ><rect x="2" y="1.500" width="5" height="8" rx="2.300" fill="#f4f6fa"/><path d="M1.200 8.500a3.300 3.300 0 0 0 6.600 0M4.500 11.500v1.500M3 13.300h3" stroke="#8a97a8" stroke-width=".8" fill="none"/></svg>
<svg class="a" style="left:888px;top:9.5px" width="13" height="10" viewBox="0 0 13 10" ><rect x="2.500" y="2.500" width="9" height="5.500" fill="none" stroke="#fff" stroke-width=".9"/><rect x="4" y="4" width="6" height="2.500" fill="#fff"/><path d="M1.500 4v2.500M2 1.500h3" stroke="#fff" stroke-width=".9"/></svg>
<svg class="a" style="left:903px;top:8.5px" width="14" height="12" viewBox="0 0 14 12" ><path d="M1 4.500h2l2.500-2.500v8L3 7.500H1z" fill="none" stroke="#fff" stroke-width=".9"/><path d="M7.500 4.500q1 1.500 0 3M9.300 3q2 3 0 6M11 1.800q3 4.200 0 8.400" fill="none" stroke="#fff" stroke-width=".8"/></svg>
<div class="x" style="left:924.00px;top:9.20px;font-size:8.6px;line-height:11px;color:#fff;letter-spacing:-0.049px;transform:scaleX(0.9);transform-origin:0 50%;">УКР</div>
<div class="x" style="left:955.50px;top:2.20px;font-size:9.2px;line-height:12px;color:#fff;letter-spacing:-0.477px;transform:scaleX(0.9);transform-origin:0 50%;">17:19</div>
<div class="x" style="left:946.00px;top:15.20px;font-size:9.2px;line-height:12px;color:#fff;letter-spacing:-0.424px;transform:scaleX(0.9);transform-origin:0 50%;">05.06.2024</div>
<svg class="a" style="left:995px;top:7.5px" width="16" height="16" viewBox="0 0 16 16" ><path d="M1.500 1.500h10.500v8.500h-5l-2.500 2.500v-2.500h-3z" fill="none" stroke="#fff" stroke-width="1"/><path d="M3.500 4h6.500M3.500 6h6.500M3.500 8h4" stroke="#e8ecf0" stroke-width=".7"/><circle cx="11" cy="10.500" r="4" fill="#2a2f38" stroke="#c8c8c8" stroke-width=".7"/></svg>
<div class="x" style="left:1004.05px;top:13.70px;font-size:7px;line-height:9px;color:#fff;letter-spacing:0.000px;font-weight:bold;">2</div>
<div class="a" style="left:1021px;top:0;width:1px;height:28px;background:#5a6676"></div>
</div>
</body>
</html>
